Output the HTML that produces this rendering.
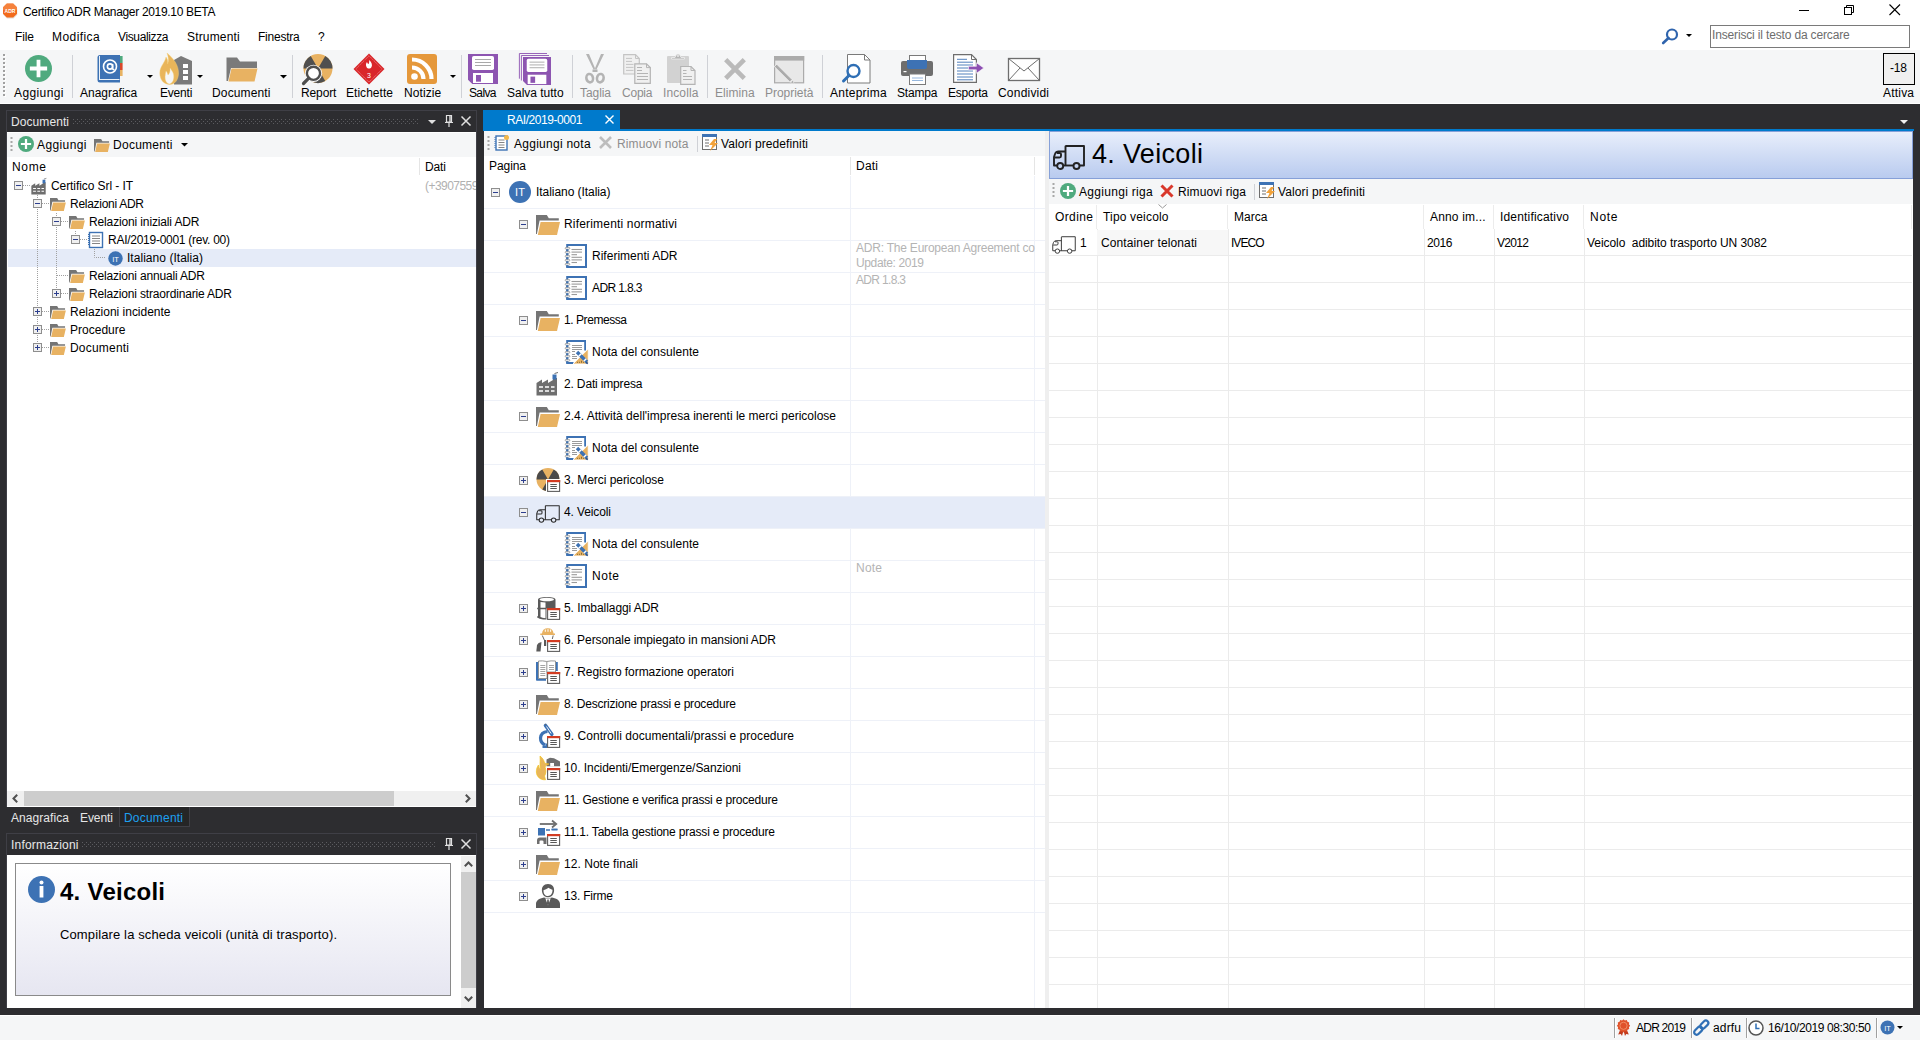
<!DOCTYPE html>
<html><head><meta charset="utf-8"><style>
html,body{margin:0;padding:0;}
body{width:1920px;height:1040px;overflow:hidden;position:relative;background:#2d2d30;font-family:"Liberation Sans", sans-serif;}
.a{position:absolute;}
.t{white-space:pre;}
svg{overflow:visible;}
</style></head><body>
<div class="a" style="left:0px;top:0px;width:1920px;height:50px;background:#fff;"></div>
<svg class="a" style="left:2px;top:3px;" width="16" height="16" viewBox="0 0 16 16"><path d="M4.8 1.2 H11.2 L15 5 V11 L11.2 14.8 H4.8 L1 11 V5 Z" fill="#c9b8a8" opacity="0.5" transform="translate(0.3,0.8)"/>
<path d="M4.8 0.5 H11.2 L15 4.3 V10.7 L11.2 14.5 H4.8 L1 10.7 V4.3 Z" fill="#f26a1b"/>
<path d="M4.8 0.5 H11.2 L15 4.3 V7 H1 V4.3 Z" fill="#f7965a" opacity="0.55"/>
<text x="8" y="9.8" text-anchor="middle" font-family="Liberation Sans" font-weight="bold" font-size="5" fill="#fff">ADR</text></svg>
<div class="a t" id="t1" style="left:23px;top:6px;font-size:12px;line-height:12px;color:#000;font-weight:normal;letter-spacing:-0.325px;">Certifico ADR Manager 2019.10 BETA</div>
<svg class="a" style="left:1799px;top:10px;" width="11" height="1" viewBox="0 0 11 1"><rect x="0" y="0" width="10" height="1" fill="#000"/></svg>
<svg class="a" style="left:1844px;top:5px;" width="11" height="11" viewBox="0 0 11 11"><path d="M2.5 2.5 V0.5 H9.5 V7.5 H7.5" fill="none" stroke="#000" stroke-width="1"/><rect x="0.5" y="2.5" width="7" height="7" fill="none" stroke="#000" stroke-width="1"/></svg>
<svg class="a" style="left:1889px;top:4px;" width="12" height="12" viewBox="0 0 12 12"><path d="M0.5 0.5 L11 11 M11 0.5 L0.5 11" stroke="#000" stroke-width="1.1"/></svg>
<div class="a t" id="t2" style="left:15px;top:31px;font-size:12px;line-height:12px;color:#000;font-weight:normal;letter-spacing:-0.115px;">File</div>
<div class="a t" id="t3" style="left:52px;top:31px;font-size:12px;line-height:12px;color:#000;font-weight:normal;letter-spacing:0.430px;">Modifica</div>
<div class="a t" id="t4" style="left:118px;top:31px;font-size:12px;line-height:12px;color:#000;font-weight:normal;letter-spacing:-0.368px;">Visualizza</div>
<div class="a t" id="t5" style="left:187px;top:31px;font-size:12px;line-height:12px;color:#000;font-weight:normal;letter-spacing:0.168px;">Strumenti</div>
<div class="a t" id="t6" style="left:258px;top:31px;font-size:12px;line-height:12px;color:#000;font-weight:normal;letter-spacing:-0.237px;">Finestra</div>
<div class="a t" id="t7" style="left:318px;top:31px;font-size:12px;line-height:12px;color:#000;font-weight:normal;letter-spacing:0.000px;">?</div>
<svg class="a" style="left:1662px;top:28px;" width="17" height="16" viewBox="0 0 17 16"><circle cx="10" cy="6.5" r="5" fill="none" stroke="#2f64ad" stroke-width="2.2"/><path d="M6.5 10 L1.2 15" stroke="#2f64ad" stroke-width="2.6" stroke-linecap="round"/></svg>
<svg class="a" style="left:1686px;top:34px;" width="6" height="3" viewBox="0 0 6 3"><path d="M0 0 H6 L3 3 Z" fill="#000"/></svg>
<div class="a" style="left:1710px;top:25px;width:200px;height:23px;background:#fff;box-sizing:border-box;border:1px solid #7a7a7a;"></div>
<div class="a t" id="t8" style="left:1712px;top:29px;font-size:12px;line-height:12px;color:#6d6d6d;font-weight:normal;letter-spacing:-0.156px;">Inserisci il testo da cercare</div>
<div class="a" style="left:0px;top:50px;width:1920px;height:53px;background:#f5f6f7;"></div>
<div class="a" style="left:0px;top:103px;width:1920px;height:1px;background:#fff;"></div>
<svg class="a" style="left:3px;top:54px;" width="4" height="44" viewBox="0 0 4 44"><path d="M2 1 V44" stroke="#fff" stroke-width="2" stroke-dasharray="2 2"/><path d="M1 0 V43" stroke="#a0a0a0" stroke-width="2" stroke-dasharray="2 2"/></svg>
<div class="a" style="left:72px;top:55px;width:1px;height:43px;background:#cfd1d6;"></div>
<div class="a" style="left:292px;top:55px;width:1px;height:43px;background:#cfd1d6;"></div>
<div class="a" style="left:461px;top:55px;width:1px;height:43px;background:#cfd1d6;"></div>
<div class="a" style="left:572px;top:55px;width:1px;height:43px;background:#cfd1d6;"></div>
<div class="a" style="left:707px;top:55px;width:1px;height:43px;background:#cfd1d6;"></div>
<div class="a" style="left:822px;top:55px;width:1px;height:43px;background:#cfd1d6;"></div>
<svg class="a" style="left:25px;top:55px;" width="27" height="27" viewBox="0 0 27 27"><circle cx="13.5" cy="13.5" r="13.5" fill="#4faa7e"/>
<path d="M4.859999999999999 13.5H22.14M13.5 4.859999999999999V22.14" stroke="#fff" stroke-width="3.7800000000000002"/></svg>
<div class="a t" id="t9" style="left:14px;top:87px;font-size:12px;line-height:12px;color:#000;font-weight:normal;letter-spacing:0.397px;">Aggiungi</div>
<svg class="a" style="left:97px;top:55px;" width="27" height="29" viewBox="0 0 27 29"><path d="M3 0 H23 V27.5 H3 Q0.5 27.5 0.5 25 V2.5 Q0.5 0 3 0Z" fill="#3d72b4"/>
<path d="M2 24.5 H22.5 M2.5 1 V24" stroke="#fff" stroke-width="0.9"/>
<rect x="23" y="1" width="2.6" height="7" fill="#4faa7e"/><rect x="23" y="8" width="2.6" height="7" fill="#d9482b"/><rect x="23" y="15" width="2.6" height="6" fill="#e8b262"/>
<circle cx="13" cy="11.5" r="6.5" fill="none" stroke="#fff" stroke-width="1.6"/>
<circle cx="13" cy="11.5" r="2.6" fill="none" stroke="#fff" stroke-width="1.6"/>
<path d="M15.6 9 V13 Q15.6 15 17.5 14.5" fill="none" stroke="#fff" stroke-width="1.6"/></svg>
<div class="a t" id="t10" style="left:80px;top:87px;font-size:12px;line-height:12px;color:#000;font-weight:normal;letter-spacing:-0.019px;">Anagrafica</div>
<svg class="a" style="left:147px;top:75px;" width="6" height="3" viewBox="0 0 6 3"><path d="M0 0 H6 L3 3 Z" fill="#000"/></svg>
<svg class="a" style="left:159px;top:53px;" width="34" height="32" viewBox="0 0 34 32"><path d="M15 7 L22 3 L33 8 V31.5 H15 Z" fill="#7a7a7a"/>
<rect x="24" y="11" width="5" height="4" fill="#fff"/><rect x="24" y="17" width="5" height="4" fill="#fff"/><rect x="24" y="23" width="5" height="4" fill="#fff"/>
<path fill-rule="evenodd" d="M8 0 C14 5 20 12 19.5 21 C19 27 16 31.5 11 31.5 C5 31.5 0.8 27 0.8 20 C0.8 13 6 10 7 4 C9 7 9 9 8.5 11 C10 8 9.5 4 8 0Z M10.5 31 C14 30 15.5 26 14.5 21 C14 19 12.5 17 11 15 C11.5 19 10 21 9 22 C8.5 20 8 19 7 18 C6 22 5.5 26 7 28.5 C8 30 9 31 10.5 31Z" fill="#e9b55a" stroke="#f5d27a" stroke-width="0.4"/></svg>
<div class="a t" id="t11" style="left:160px;top:87px;font-size:12px;line-height:12px;color:#000;font-weight:normal;letter-spacing:-0.192px;">Eventi</div>
<svg class="a" style="left:197px;top:75px;" width="6" height="3" viewBox="0 0 6 3"><path d="M0 0 H6 L3 3 Z" fill="#000"/></svg>
<svg class="a" style="left:226px;top:57px;" width="32" height="26" viewBox="0 0 32 26"><path d="M0.5 0.5 L0.5 24 L2 24 L5 11 L31 11 L31 4.5 L14 4.5 L11 0.5 Z" fill="#7a7a7a"/>
<path d="M5.5 11.5 L31.5 11.5 L28.5 24.5 L2.5 24.5 Z" fill="#e8b262"/></svg>
<div class="a t" id="t12" style="left:212px;top:87px;font-size:12px;line-height:12px;color:#000;font-weight:normal;letter-spacing:0.143px;">Documenti</div>
<svg class="a" style="left:280px;top:75px;" width="7" height="3" viewBox="0 0 7 3"><path d="M0 0 H7 L3.5 3.5 Z" fill="#000"/></svg>
<svg class="a" style="left:302px;top:54px;" width="32" height="32" viewBox="0 0 32 32"><circle cx="16" cy="14.5" r="14.5" fill="#e8b262"/>
<path d="M16 14.5 L23.25 1.94 A14.5 14.5 0 0 1 30.5 14.5 Z" fill="#4f4f4f"/>
<path d="M16 14.5 L23.25 27.06 A14.5 14.5 0 0 1 8.75 27.06 Z" fill="#4f4f4f"/>
<path d="M16 14.5 L1.5 14.5 A14.5 14.5 0 0 1 8.75 1.94 Z" fill="#4f4f4f"/>
<circle cx="11.5" cy="19.3" r="8.6" fill="#fff"/>
<circle cx="11.5" cy="19.3" r="6.6" fill="#fff" stroke="#4f4f4f" stroke-width="2.4"/>
<path d="M6.8 24.2 L1.5 29.5" stroke="#4f4f4f" stroke-width="3.2" stroke-linecap="round"/></svg>
<div class="a t" id="t13" style="left:301px;top:87px;font-size:12px;line-height:12px;color:#000;font-weight:normal;letter-spacing:-0.126px;">Report</div>
<svg class="a" style="left:353px;top:53px;" width="32" height="32" viewBox="0 0 32 32"><path d="M16 0.5 L31.5 16 L16 31.5 L0.5 16 Z" fill="#d9262a"/>
<path d="M16 2.8 L29.2 16 L16 29.2 L2.8 16 Z" fill="none" stroke="#fff" stroke-width="0.5" stroke-dasharray="1 0.8" opacity="0.85"/>
<path d="M16 7 C19 9.5 19.5 12 18.5 14 C17.5 16 14.5 16 13.5 14 C12.5 12 13 10 14 9 C14.5 10.5 15 11 15.5 11 C16 10 16.5 9 16 7Z" fill="#fff"/>
<text x="16" y="25" text-anchor="middle" font-family="Liberation Sans" font-size="7" fill="#fff">3</text></svg>
<div class="a t" id="t14" style="left:346px;top:87px;font-size:12px;line-height:12px;color:#000;font-weight:normal;letter-spacing:0.037px;">Etichette</div>
<svg class="a" style="left:407px;top:54px;" width="30" height="30" viewBox="0 0 30 30"><rect x="0" y="0" width="30" height="30" rx="3" fill="#e5983b"/>
<circle cx="7.5" cy="22.5" r="3.3" fill="#fff"/>
<path d="M5 13.5 A11.5 11.5 0 0 1 16.5 25 M5 5.5 A19.5 19.5 0 0 1 24.5 25" fill="none" stroke="#fff" stroke-width="4.2"/></svg>
<div class="a t" id="t15" style="left:404px;top:87px;font-size:12px;line-height:12px;color:#000;font-weight:normal;letter-spacing:0.102px;">Notizie</div>
<svg class="a" style="left:450px;top:75px;" width="6" height="3" viewBox="0 0 6 3"><path d="M0 0 H6 L3 3 Z" fill="#000"/></svg>
<svg class="a" style="left:468px;top:54px;" width="30" height="30" viewBox="0 0 30 30"><g transform="translate(0,0) scale(1)"><path d="M0 0 H30 V30 H4.3 L0 25.7 Z" fill="#8d55b1"/>
<rect x="4" y="2" width="22" height="14" rx="1.8" fill="#fff"/><path d="M7 5.5h16M7 8.5h16M7 11.5h16" stroke="#a9a9a9" stroke-width="1"/>
<rect x="5" y="19" width="20" height="10" fill="#fff"/><rect x="8" y="21" width="5" height="6.7" fill="#8d55b1"/></g></svg>
<div class="a t" id="t16" style="left:469px;top:87px;font-size:12px;line-height:12px;color:#000;font-weight:normal;letter-spacing:-0.633px;">Salva</div>
<svg class="a" style="left:519px;top:53px;" width="33" height="33" viewBox="0 0 33 33"><path d="M0.4 25.7 V0.5 H28" fill="none" stroke="#8d55b1" stroke-width="0.9"/>
<path d="M2.4 27.5 V2.5 H30" fill="none" stroke="#8d55b1" stroke-width="0.9"/>
<g transform="translate(4,4) scale(0.9333333333333333)"><path d="M0 0 H30 V30 H4.3 L0 25.7 Z" fill="#8d55b1"/>
<rect x="4" y="2" width="22" height="14" rx="1.8" fill="#fff"/><path d="M7 5.5h16M7 8.5h16M7 11.5h16" stroke="#a9a9a9" stroke-width="1"/>
<rect x="5" y="19" width="20" height="10" fill="#fff"/><rect x="8" y="21" width="5" height="6.7" fill="#8d55b1"/></g></svg>
<div class="a t" id="t17" style="left:507px;top:87px;font-size:12px;line-height:12px;color:#000;font-weight:normal;letter-spacing:-0.010px;">Salva tutto</div>
<svg class="a" style="left:585px;top:54px;" width="20" height="30" viewBox="0 0 20 30"><path d="M1 0 L8.5 15.5 L10.5 15.5 L4 0 Z M19 0 L11.5 15.5 L9.5 15.5 L16 0 Z" fill="#b4b4b4"/>
<rect x="7.5" y="15.5" width="5" height="2.5" fill="#b4b4b4"/>
<ellipse cx="4.7" cy="24.2" rx="3.3" ry="4.2" fill="none" stroke="#b4b4b4" stroke-width="2.6" transform="rotate(-12 4.7 24.2)"/>
<ellipse cx="15.3" cy="24.2" rx="3.3" ry="4.2" fill="none" stroke="#b4b4b4" stroke-width="2.6" transform="rotate(12 15.3 24.2)"/></svg>
<div class="a t" id="t18" style="left:580px;top:87px;font-size:12px;line-height:12px;color:#8d8d8d;font-weight:normal;letter-spacing:-0.072px;">Taglia</div>
<svg class="a" style="left:623px;top:54px;" width="29" height="31" viewBox="0 0 29 31"><path d="M0.7 0.7 H12.5 L16.3 4.5 V20 H0.7 Z" fill="#f0f0f0" stroke="#c4c4c4" stroke-width="1.2"/>
<path d="M12.5 0.7 V4.5 H16.3" fill="none" stroke="#c4c4c4" stroke-width="1"/>
<path d="M3 4.4h6M3 7.4h6M3 10.4h7.5M3 13.4h7.5M3 16.4h7.5" stroke="#c4c4c4" stroke-width="1"/>
<path d="M11.8 9.8 H23.5 L27.3 13.6 V29.3 H11.8 Z" fill="#f0f0f0" stroke="#b4b4b4" stroke-width="1.2"/>
<path d="M23.5 9.8 V13.6 H27.3" fill="none" stroke="#b4b4b4" stroke-width="1"/>
<path d="M14 13.5h5M14 16.5h5M14 19.5h11M14 22.5h11M14 25.5h11" stroke="#b4b4b4" stroke-width="1"/></svg>
<div class="a t" id="t19" style="left:622px;top:87px;font-size:12px;line-height:12px;color:#8d8d8d;font-weight:normal;letter-spacing:-0.215px;">Copia</div>
<svg class="a" style="left:667px;top:53px;" width="29" height="32" viewBox="0 0 29 32"><rect x="0" y="3" width="22" height="27" rx="1" fill="#d2d2d2"/>
<path d="M4.5 6 H17.5 V4.5 H14 Q13 1 11 1 Q9 1 8 4.5 H4.5 Z" fill="#b4b4b4" stroke="#f0f0f0" stroke-width="0.8"/>
<circle cx="11" cy="3" r="0.9" fill="#f0f0f0"/>
<path d="M13.7 13.5 H24 L28 17.5 V31.3 H13.7 Z" fill="#f0f0f0" stroke="#b4b4b4" stroke-width="1.2"/>
<path d="M24 13.5 V17.5 H28" fill="none" stroke="#b4b4b4" stroke-width="1"/>
<path d="M16 17.5h3.5M16 20.5h3.5M16 23.5h9M16 26.5h9" stroke="#b4b4b4" stroke-width="1"/></svg>
<div class="a t" id="t20" style="left:663px;top:87px;font-size:12px;line-height:12px;color:#8d8d8d;font-weight:normal;letter-spacing:0.119px;">Incolla</div>
<svg class="a" style="left:724px;top:58px;" width="22" height="22" viewBox="0 0 22 22"><path d="M1.7 1.7 L20.3 20.3 M20.3 1.7 L1.7 20.3" stroke="#bababa" stroke-width="4.6"/></svg>
<div class="a t" id="t21" style="left:715px;top:87px;font-size:12px;line-height:12px;color:#8d8d8d;font-weight:normal;letter-spacing:0.040px;">Elimina</div>
<svg class="a" style="left:774px;top:56px;" width="31" height="30" viewBox="0 0 31 30"><rect x="0.6" y="0.6" width="29" height="26.2" fill="#e8e8e8" stroke="#ababab" stroke-width="1.2"/>
<rect x="0" y="0" width="30.2" height="4.6" fill="#ababab"/>
<path d="M0.2 10.5 L2.8 8.2 L18.2 23.6 L15.8 26 Z" fill="#ababab" stroke="#f0f0f0" stroke-width="0.9"/>
<path d="M16.5 26.5 L19 24 L20 28 Z" fill="#ababab" stroke="#f0f0f0" stroke-width="0.6"/></svg>
<div class="a t" id="t22" style="left:765px;top:87px;font-size:12px;line-height:12px;color:#8d8d8d;font-weight:normal;letter-spacing:-0.025px;">Proprietà</div>
<svg class="a" style="left:842px;top:54px;" width="29" height="31" viewBox="0 0 29 31"><path d="M5.5 0.5 H22.5 L28 6 V29 H5.5 Z" fill="#fff" stroke="#7a7a7a" stroke-width="1"/>
<path d="M22.5 0.5 V6 H28" fill="none" stroke="#7a7a7a" stroke-width="1"/>
<circle cx="11.5" cy="17" r="6" fill="none" stroke="#2f6fb5" stroke-width="2.4"/>
<path d="M7 21.5 L1.5 27" stroke="#2f6fb5" stroke-width="3" stroke-linecap="round"/></svg>
<div class="a t" id="t23" style="left:830px;top:87px;font-size:12px;line-height:12px;color:#000;font-weight:normal;letter-spacing:0.237px;">Anteprima</div>
<svg class="a" style="left:901px;top:55px;" width="33" height="30" viewBox="0 0 33 30"><rect x="8.5" y="0.5" width="16" height="10" fill="#fff" stroke="#7a7a7a" stroke-width="1"/>
<rect x="0" y="6" width="32" height="15" rx="2" fill="#6e6e6e"/>
<path d="M6 5 H26 V12 Q26 14 24 14 H8 Q6 14 6 12 Z" fill="#3d72b4"/>
<rect x="8.5" y="19" width="16" height="10.5" fill="#fff" stroke="#7a7a7a" stroke-width="1"/>
<path d="M11 23h11M11 25.5h11" stroke="#6a9ad0" stroke-width="0.7"/>
<rect x="2.5" y="16" width="3" height="1.2" fill="#fff"/></svg>
<div class="a t" id="t24" style="left:897px;top:87px;font-size:12px;line-height:12px;color:#000;font-weight:normal;letter-spacing:-0.192px;">Stampa</div>
<svg class="a" style="left:953px;top:54px;" width="32" height="31" viewBox="0 0 32 31"><path d="M0.6 0.6 H18.5 L23.4 5.5 V28.4 H0.6 Z" fill="#fff" stroke="#6e6e6e" stroke-width="1.2"/>
<path d="M18.5 0.6 V5.5 H23.4" fill="none" stroke="#6e6e6e" stroke-width="1"/>
<path d="M4 5.3h10M4 8.2h16M4 11h16M4 14h16M4 17h16M4 20h16M4 23h16M4 25.8h16" stroke="#3d72b4" stroke-width="0.9"/>
<path d="M15.5 12.3 H23.5 V8.8 L30.8 14 L23.5 19.3 V15.8 H15.5 Z" fill="#8d4fb3" stroke="#fff" stroke-width="0.6"/></svg>
<div class="a t" id="t25" style="left:948px;top:87px;font-size:12px;line-height:12px;color:#000;font-weight:normal;letter-spacing:-0.227px;">Esporta</div>
<svg class="a" style="left:1008px;top:58px;" width="33" height="24" viewBox="0 0 33 24"><rect x="0.5" y="0.5" width="31" height="22" fill="#fff" stroke="#6e6e6e" stroke-width="1.3"/>
<path d="M0.5 0.5 L16 13 L31.5 0.5 M0.5 22.5 L12 10 M31.5 22.5 L20 10" fill="none" stroke="#6e6e6e" stroke-width="1"/></svg>
<div class="a t" id="t26" style="left:998px;top:87px;font-size:12px;line-height:12px;color:#000;font-weight:normal;letter-spacing:0.205px;">Condividi</div>
<div class="a" style="left:1883px;top:53px;width:32px;height:32px;background:#f0f0f0;box-sizing:border-box;border:1px solid #000;"></div>
<div class="a t" id="t27" style="left:1890px;top:62px;font-size:12px;line-height:12px;color:#000;font-weight:normal;letter-spacing:-0.172px;">-18</div>
<div class="a t" id="t28" style="left:1883px;top:87px;font-size:12px;line-height:12px;color:#000;font-weight:normal;letter-spacing:0.197px;">Attiva</div>
<div class="a" style="left:0px;top:104px;width:1920px;height:910px;background:#2d2d30;"></div>
<div class="a" style="left:6px;top:110px;width:471px;height:697px;box-sizing:border-box;border:1px solid #3f3f46;"></div>
<div class="a t" id="t29" style="left:11px;top:116px;font-size:12px;line-height:12px;color:#e8e8e8;font-weight:normal;letter-spacing:0.080px;">Documenti</div>
<svg class="a" style="left:73px;top:119px;" width="345" height="5" viewBox="0 0 345 5"><path d="M0 0.5 H345 M2 2.5 H345 M0 4.5 H345" stroke="#5c5c60" stroke-width="1" stroke-dasharray="1 3"/></svg>
<svg class="a" style="left:428px;top:120px;" width="8" height="4" viewBox="0 0 8 4"><path d="M0 0 H8 L4 4 Z" fill="#e0e0e0"/></svg>
<svg class="a" style="left:445px;top:115px;" width="8" height="12" viewBox="0 0 8 12"><path d="M1.5 0.5 H6.5 V7 H1.5 Z M0 7.5 H8 M4 7.5 V12" fill="none" stroke="#e0e0e0" stroke-width="1.2"/><path d="M5 1 V7" stroke="#e0e0e0" stroke-width="1.4"/></svg>
<svg class="a" style="left:461px;top:116px;" width="10" height="10" viewBox="0 0 10 10"><path d="M0.5 0.5 L9.5 9.5 M9.5 0.5 L0.5 9.5" stroke="#e0e0e0" stroke-width="1.5"/></svg>
<div class="a" style="left:7px;top:132px;width:469px;height:675px;background:#fff;"></div>
<div class="a" style="left:7px;top:133px;width:469px;height:24px;background:#f5f6f7;"></div>
<svg class="a" style="left:10px;top:137px;" width="3" height="16" viewBox="0 0 3 16"><path d="M1.5 0 V16" stroke="#a8a8a8" stroke-width="2" stroke-dasharray="2 2"/></svg>
<svg class="a" style="left:18px;top:136px;" width="16" height="16" viewBox="0 0 16 16"><circle cx="8.0" cy="8.0" r="8.0" fill="#4faa7e"/>
<path d="M2.88 8.0H13.120000000000001M8.0 2.88V13.120000000000001" stroke="#fff" stroke-width="2.24"/></svg>
<div class="a t" id="t30" style="left:37px;top:139px;font-size:12px;line-height:12px;color:#000;font-weight:normal;letter-spacing:0.397px;">Aggiungi</div>
<svg class="a" style="left:94px;top:137px;" width="16" height="15" viewBox="0 0 16 15"><g transform="scale(0.66)"><g transform="scale(1.0)">
<path d="M0 2.9 H10.8 L12.8 6.3 H22.8 V8.6 H3.6 L0.9 22 H0 Z" fill="#757575"/>
<path d="M4.6 10 H24 L21 22.9 H1.8 Z" fill="#e8b262"/>
</g></g></svg>
<div class="a t" id="t31" style="left:113px;top:139px;font-size:12px;line-height:12px;color:#000;font-weight:normal;letter-spacing:0.268px;">Documenti</div>
<svg class="a" style="left:181px;top:143px;" width="7" height="4" viewBox="0 0 7 4"><path d="M0 0 H7 L3.5 3.5 Z" fill="#000"/></svg>
<div class="a t" id="t32" style="left:12px;top:161px;font-size:12px;line-height:12px;color:#000;font-weight:normal;letter-spacing:0.661px;">Nome</div>
<div class="a" style="left:419px;top:158px;width:1px;height:17px;background:#e5e5e5;"></div>
<div class="a t" id="t33" style="left:425px;top:161px;font-size:12px;line-height:12px;color:#000;font-weight:normal;letter-spacing:-0.115px;">Dati</div>
<div class="a" style="left:8px;top:249px;width:468px;height:18px;background:#e5ebf8;"></div>
<svg class="a" style="left:0px;top:170px;" width="130" height="200" viewBox="0 0 130 200"><g stroke="#a0a0a0" stroke-width="1" stroke-dasharray="1 1" fill="none">
<path d="M23 15.5 H30"/>
<path d="M37.5 25 V178"/>
<path d="M42 33.5 H49 M42 141.5 H49 M42 159.5 H49 M42 177.5 H49"/>
<path d="M56.5 43 V124"/>
<path d="M61 51.5 H68 M57 105.5 H68 M61 123.5 H68"/>
<path d="M75.5 61 V69.5"/>
<path d="M94.5 79 V87.5 H106"/>
<path d="M80 69.5 H87"/>
</g></svg>
<svg class="a" style="left:14px;top:181px;" width="9" height="9" viewBox="0 0 9 9"><rect x="0.5" y="0.5" width="8" height="8" fill="#f0f0f0" stroke="#8e8e8e" stroke-width="1"/><path d="M2 4.5h5" stroke="#2d3f8e" stroke-width="1"/></svg>
<svg class="a" style="left:31px;top:178px;" width="17" height="16" viewBox="0 0 17 16"><g transform="scale(0.7)"><g transform="scale(1.0)">
<path d="M0.5 23.5 V11 L6 7.5 V11 L12 7.5 V11 L17 8 V6 H21 V23.5 Z" fill="#6e6e6e"/>
<rect x="16.5" y="2.5" width="4" height="5" fill="#3d72b4"/>
<path d="M18.5 1.5 L22 0.5" stroke="#6e6e6e" stroke-width="1"/>
<path d="M3 15h4M9 15h4M15 15h3.5M3 19h4M9 19h4M15 19h3.5" stroke="#fff" stroke-width="1.6"/>
</g></g></svg>
<div class="a t" id="t34" style="left:51px;top:180px;font-size:12px;line-height:12px;color:#000;font-weight:normal;letter-spacing:-0.079px;">Certifico Srl - IT</div>
<svg class="a" style="left:33px;top:199px;" width="9" height="9" viewBox="0 0 9 9"><rect x="0.5" y="0.5" width="8" height="8" fill="#f0f0f0" stroke="#8e8e8e" stroke-width="1"/><path d="M2 4.5h5" stroke="#2d3f8e" stroke-width="1"/></svg>
<svg class="a" style="left:50px;top:196px;" width="16" height="16" viewBox="0 0 16 16"><g transform="scale(0.66)"><g transform="scale(1.0)">
<path d="M0 2.9 H10.8 L12.8 6.3 H22.8 V8.6 H3.6 L0.9 22 H0 Z" fill="#757575"/>
<path d="M4.6 10 H24 L21 22.9 H1.8 Z" fill="#e8b262"/>
</g></g></svg>
<div class="a t" id="t35" style="left:70px;top:198px;font-size:12px;line-height:12px;color:#000;font-weight:normal;letter-spacing:-0.281px;">Relazioni ADR</div>
<svg class="a" style="left:52px;top:217px;" width="9" height="9" viewBox="0 0 9 9"><rect x="0.5" y="0.5" width="8" height="8" fill="#f0f0f0" stroke="#8e8e8e" stroke-width="1"/><path d="M2 4.5h5" stroke="#2d3f8e" stroke-width="1"/></svg>
<svg class="a" style="left:69px;top:214px;" width="16" height="16" viewBox="0 0 16 16"><g transform="scale(0.66)"><g transform="scale(1.0)">
<path d="M0 2.9 H10.8 L12.8 6.3 H22.8 V8.6 H3.6 L0.9 22 H0 Z" fill="#757575"/>
<path d="M4.6 10 H24 L21 22.9 H1.8 Z" fill="#e8b262"/>
</g></g></svg>
<div class="a t" id="t36" style="left:89px;top:216px;font-size:12px;line-height:12px;color:#000;font-weight:normal;letter-spacing:-0.138px;">Relazioni iniziali ADR</div>
<svg class="a" style="left:71px;top:235px;" width="9" height="9" viewBox="0 0 9 9"><rect x="0.5" y="0.5" width="8" height="8" fill="#f0f0f0" stroke="#8e8e8e" stroke-width="1"/><path d="M2 4.5h5" stroke="#2d3f8e" stroke-width="1"/></svg>
<svg class="a" style="left:88px;top:232px;" width="15" height="16" viewBox="0 0 15 16"><rect x="1.5" y="0.5" width="13" height="15" fill="#fff" stroke="#3d72b4" stroke-width="1.4"/>
<path d="M0.5 2 V14" stroke="#3d72b4" stroke-width="1" stroke-dasharray="1 1"/>
<path d="M4 4h8M4 6.5h8M4 9h8M4 11.5h8" stroke="#777" stroke-width="0.9"/></svg>
<div class="a t" id="t37" style="left:108px;top:234px;font-size:12px;line-height:12px;color:#000;font-weight:normal;letter-spacing:-0.266px;">RAI/2019-0001 (rev. 00)</div>
<svg class="a" style="left:108px;top:251px;" width="15" height="15" viewBox="0 0 15 15"><circle cx="7.5" cy="7.5" r="7.2" fill="#3d72b4"/><text x="7.5" y="10.5" text-anchor="middle" font-family="Liberation Sans" font-size="7.5" fill="#fff">IT</text></svg>
<div class="a t" id="t38" style="left:127px;top:252px;font-size:12px;line-height:12px;color:#000;font-weight:normal;letter-spacing:0.039px;">Italiano (Italia)</div>
<svg class="a" style="left:69px;top:268px;" width="16" height="16" viewBox="0 0 16 16"><g transform="scale(0.66)"><g transform="scale(1.0)">
<path d="M0 2.9 H10.8 L12.8 6.3 H22.8 V8.6 H3.6 L0.9 22 H0 Z" fill="#757575"/>
<path d="M4.6 10 H24 L21 22.9 H1.8 Z" fill="#e8b262"/>
</g></g></svg>
<div class="a t" id="t39" style="left:89px;top:270px;font-size:12px;line-height:12px;color:#000;font-weight:normal;letter-spacing:-0.170px;">Relazioni annuali ADR</div>
<svg class="a" style="left:52px;top:289px;" width="9" height="9" viewBox="0 0 9 9"><rect x="0.5" y="0.5" width="8" height="8" fill="#f0f0f0" stroke="#8e8e8e" stroke-width="1"/><path d="M2 4.5h5" stroke="#2d3f8e" stroke-width="1"/><path d="M4.5 2v5" stroke="#2d3f8e" stroke-width="1"/></svg>
<svg class="a" style="left:69px;top:286px;" width="16" height="16" viewBox="0 0 16 16"><g transform="scale(0.66)"><g transform="scale(1.0)">
<path d="M0 2.9 H10.8 L12.8 6.3 H22.8 V8.6 H3.6 L0.9 22 H0 Z" fill="#757575"/>
<path d="M4.6 10 H24 L21 22.9 H1.8 Z" fill="#e8b262"/>
</g></g></svg>
<div class="a t" id="t40" style="left:89px;top:288px;font-size:12px;line-height:12px;color:#000;font-weight:normal;letter-spacing:-0.169px;">Relazioni straordinarie ADR</div>
<svg class="a" style="left:33px;top:307px;" width="9" height="9" viewBox="0 0 9 9"><rect x="0.5" y="0.5" width="8" height="8" fill="#f0f0f0" stroke="#8e8e8e" stroke-width="1"/><path d="M2 4.5h5" stroke="#2d3f8e" stroke-width="1"/><path d="M4.5 2v5" stroke="#2d3f8e" stroke-width="1"/></svg>
<svg class="a" style="left:50px;top:304px;" width="16" height="16" viewBox="0 0 16 16"><g transform="scale(0.66)"><g transform="scale(1.0)">
<path d="M0 2.9 H10.8 L12.8 6.3 H22.8 V8.6 H3.6 L0.9 22 H0 Z" fill="#757575"/>
<path d="M4.6 10 H24 L21 22.9 H1.8 Z" fill="#e8b262"/>
</g></g></svg>
<div class="a t" id="t41" style="left:70px;top:306px;font-size:12px;line-height:12px;color:#000;font-weight:normal;letter-spacing:-0.013px;">Relazioni incidente</div>
<svg class="a" style="left:33px;top:325px;" width="9" height="9" viewBox="0 0 9 9"><rect x="0.5" y="0.5" width="8" height="8" fill="#f0f0f0" stroke="#8e8e8e" stroke-width="1"/><path d="M2 4.5h5" stroke="#2d3f8e" stroke-width="1"/><path d="M4.5 2v5" stroke="#2d3f8e" stroke-width="1"/></svg>
<svg class="a" style="left:50px;top:322px;" width="16" height="16" viewBox="0 0 16 16"><g transform="scale(0.66)"><g transform="scale(1.0)">
<path d="M0 2.9 H10.8 L12.8 6.3 H22.8 V8.6 H3.6 L0.9 22 H0 Z" fill="#757575"/>
<path d="M4.6 10 H24 L21 22.9 H1.8 Z" fill="#e8b262"/>
</g></g></svg>
<div class="a t" id="t42" style="left:70px;top:324px;font-size:12px;line-height:12px;color:#000;font-weight:normal;letter-spacing:0.016px;">Procedure</div>
<svg class="a" style="left:33px;top:343px;" width="9" height="9" viewBox="0 0 9 9"><rect x="0.5" y="0.5" width="8" height="8" fill="#f0f0f0" stroke="#8e8e8e" stroke-width="1"/><path d="M2 4.5h5" stroke="#2d3f8e" stroke-width="1"/><path d="M4.5 2v5" stroke="#2d3f8e" stroke-width="1"/></svg>
<svg class="a" style="left:50px;top:340px;" width="16" height="16" viewBox="0 0 16 16"><g transform="scale(0.66)"><g transform="scale(1.0)">
<path d="M0 2.9 H10.8 L12.8 6.3 H22.8 V8.6 H3.6 L0.9 22 H0 Z" fill="#757575"/>
<path d="M4.6 10 H24 L21 22.9 H1.8 Z" fill="#e8b262"/>
</g></g></svg>
<div class="a t" id="t43" style="left:70px;top:342px;font-size:12px;line-height:12px;color:#000;font-weight:normal;letter-spacing:0.205px;">Documenti</div>
<div class="a" style="left:7px;top:177px;width:469px;height:20px;overflow:hidden"><div class="a" style="left:418px;top:3px;font-size:12px;line-height:12px;color:#b0b0b0;white-space:pre;letter-spacing:-0.55px">(+39075598</div></div>
<div class="a" style="left:7px;top:791px;width:469px;height:15px;background:#f0f0f0;"></div>
<div class="a" style="left:24px;top:791px;width:370px;height:15px;background:#cdcdcd;"></div>
<svg class="a" style="left:12px;top:794px;" width="6" height="9" viewBox="0 0 6 9"><path d="M5.2 0.8 L1.5 4.5 L5.2 8.2" fill="none" stroke="#505050" stroke-width="2"/></svg>
<svg class="a" style="left:465px;top:794px;" width="6" height="9" viewBox="0 0 6 9"><path d="M0.8 0.8 L4.5 4.5 L0.8 8.2" fill="none" stroke="#505050" stroke-width="2"/></svg>
<div class="a" style="left:119px;top:807px;width:71px;height:20px;background:#252526;box-sizing:border-box;border:1px solid #3f3f46;border-top:none;"></div>
<div class="a t" id="t44" style="left:11px;top:812px;font-size:12px;line-height:12px;color:#e6e6e6;font-weight:normal;letter-spacing:0.069px;">Anagrafica</div>
<div class="a t" id="t45" style="left:80px;top:812px;font-size:12px;line-height:12px;color:#e6e6e6;font-weight:normal;letter-spacing:-0.072px;">Eventi</div>
<div class="a t" id="t46" style="left:124px;top:812px;font-size:12px;line-height:12px;color:#1ea0f0;font-weight:normal;letter-spacing:0.205px;">Documenti</div>
<div class="a" style="left:6px;top:833px;width:471px;height:175px;box-sizing:border-box;border:1px solid #3f3f46;"></div>
<div class="a t" id="t47" style="left:11px;top:839px;font-size:12px;line-height:12px;color:#e8e8e8;font-weight:normal;letter-spacing:0.193px;">Informazioni</div>
<svg class="a" style="left:82px;top:842px;" width="354" height="5" viewBox="0 0 354 5"><path d="M0 0.5 H354 M2 2.5 H354 M0 4.5 H354" stroke="#5c5c60" stroke-width="1" stroke-dasharray="1 3"/></svg>
<svg class="a" style="left:445px;top:838px;" width="8" height="12" viewBox="0 0 8 12"><path d="M1.5 0.5 H6.5 V7 H1.5 Z M0 7.5 H8 M4 7.5 V12" fill="none" stroke="#e0e0e0" stroke-width="1.2"/><path d="M5 1 V7" stroke="#e0e0e0" stroke-width="1.4"/></svg>
<svg class="a" style="left:461px;top:839px;" width="10" height="10" viewBox="0 0 10 10"><path d="M0.5 0.5 L9.5 9.5 M9.5 0.5 L0.5 9.5" stroke="#e0e0e0" stroke-width="1.5"/></svg>
<div class="a" style="left:7px;top:855px;width:469px;height:153px;background:#fff;"></div>
<div class="a" style="left:15px;top:863px;width:436px;height:133px;background:linear-gradient(#ffffff, #e6e6f1);box-sizing:border-box;border:1px solid #8a8a8a;"></div>
<svg class="a" style="left:28px;top:876px;" width="27" height="27" viewBox="0 0 27 27"><circle cx="13.5" cy="13.5" r="13.5" fill="#3d72b4"/><circle cx="13.5" cy="6.5" r="2" fill="#fff"/><rect x="11.6" y="10" width="3.8" height="11.5" fill="#fff"/></svg>
<div class="a t" id="t48" style="left:60px;top:880px;font-size:24px;line-height:24px;color:#000;font-weight:bold;letter-spacing:0.252px;">4. Veicoli</div>
<div class="a t" id="t49" style="left:60px;top:928px;font-size:13px;line-height:13px;color:#000;font-weight:normal;letter-spacing:0.126px;">Compilare la scheda veicoli (unità di trasporto).</div>
<div class="a" style="left:461px;top:856px;width:15px;height:152px;background:#f0f0f0;"></div>
<div class="a" style="left:461px;top:872px;width:15px;height:116px;background:#cdcdcd;"></div>
<svg class="a" style="left:464px;top:861px;" width="9" height="6" viewBox="0 0 9 6"><path d="M0.8 5.2 L4.5 1.5 L8.2 5.2" fill="none" stroke="#505050" stroke-width="2"/></svg>
<svg class="a" style="left:464px;top:996px;" width="9" height="6" viewBox="0 0 9 6"><path d="M0.8 0.8 L4.5 4.5 L8.2 0.8" fill="none" stroke="#505050" stroke-width="2"/></svg>
<div class="a" style="left:483px;top:110px;width:137px;height:19px;background:#007acc;"></div>
<div class="a t" id="t50" style="left:507px;top:114px;font-size:12px;line-height:12px;color:#fff;font-weight:normal;letter-spacing:-0.436px;">RAI/2019-0001</div>
<svg class="a" style="left:605px;top:115px;" width="9" height="9" viewBox="0 0 9 9"><path d="M0.5 0.5 L8.5 8.5 M8.5 0.5 L0.5 8.5" stroke="#fff" stroke-width="1.4"/></svg>
<div class="a" style="left:483px;top:129px;width:1431px;height:2px;background:#007acc;"></div>
<svg class="a" style="left:1900px;top:120px;" width="8" height="4" viewBox="0 0 8 4"><path d="M0 0 H8 L4 4 Z" fill="#f0f0f0"/></svg>
<div class="a" style="left:484px;top:131px;width:561px;height:877px;background:#fff;"></div>
<div class="a" style="left:484px;top:131px;width:561px;height:25px;background:#f5f6f7;"></div>
<svg class="a" style="left:487px;top:136px;" width="3" height="16" viewBox="0 0 3 16"><path d="M1.5 0 V16" stroke="#a8a8a8" stroke-width="2" stroke-dasharray="2 2"/></svg>
<svg class="a" style="left:494px;top:134px;" width="16" height="17" viewBox="0 0 16 17"><rect x="2" y="2" width="11" height="14" fill="#fff" stroke="#3d72b4" stroke-width="1.4"/>
<path d="M1 3 V15" stroke="#3d72b4" stroke-width="1" stroke-dasharray="1 1"/><path d="M4.5 6h6M4.5 8.5h6M4.5 11h6M4.5 13.5h6" stroke="#777" stroke-width="0.9"/>
<circle cx="12.5" cy="3.5" r="2.5" fill="#f2b84b"/></svg>
<div class="a t" id="t51" style="left:514px;top:138px;font-size:12px;line-height:12px;color:#000;font-weight:normal;letter-spacing:0.266px;">Aggiungi nota</div>
<svg class="a" style="left:599px;top:136px;" width="13" height="13" viewBox="0 0 13 13"><path d="M1 1 L12 12 M12 1 L1 12" stroke="#bdbdbd" stroke-width="2.6"/></svg>
<div class="a t" id="t52" style="left:617px;top:138px;font-size:12px;line-height:12px;color:#8d8d8d;font-weight:normal;letter-spacing:0.124px;">Rimuovi nota</div>
<div class="a" style="left:697px;top:136px;width:1px;height:16px;background:#cfd1d6;"></div>
<svg class="a" style="left:702px;top:134px;" width="17" height="17" viewBox="0 0 17 17"><rect x="0.5" y="0.5" width="14" height="15" fill="#fff" stroke="#6e6e6e" stroke-width="1"/><rect x="0" y="0" width="15" height="3" fill="#3d72b4"/>
<path d="M3 6h4M3 9h4M3 12h4" stroke="#6e6e6e" stroke-width="1"/><path d="M12 5 L7 11 H10.5 L8 17 L16 9 H12.5 L15 5 Z" fill="#f2a23a"/></svg>
<div class="a t" id="t53" style="left:721px;top:138px;font-size:12px;line-height:12px;color:#000;font-weight:normal;letter-spacing:0.108px;">Valori predefiniti</div>
<div class="a t" id="t54" style="left:489px;top:160px;font-size:12px;line-height:12px;color:#000;font-weight:normal;letter-spacing:-0.075px;">Pagina</div>
<div class="a" style="left:850px;top:157px;width:1px;height:18px;background:#e5e5e5;"></div>
<div class="a t" id="t55" style="left:856px;top:160px;font-size:12px;line-height:12px;color:#000;font-weight:normal;letter-spacing:0.219px;">Dati</div>
<div class="a" style="left:1034px;top:157px;width:1px;height:18px;background:#e5e5e5;"></div>
<div class="a" style="left:850px;top:176px;width:1px;height:832px;background:#eef1f8;"></div>
<div class="a" style="left:1034px;top:176px;width:1px;height:832px;background:#eef1f8;"></div>
<div class="a" style="left:484px;top:208px;width:561px;height:1px;background:#eef1f8;"></div>
<svg class="a" style="left:491px;top:188px;" width="9" height="9" viewBox="0 0 9 9"><rect x="0.5" y="0.5" width="8" height="8" fill="#f0f0f0" stroke="#8e8e8e" stroke-width="1"/><path d="M2 4.5h5" stroke="#2d3f8e" stroke-width="1"/></svg>
<svg class="a" style="left:509px;top:181px;" width="22" height="22" viewBox="0 0 22 22"><circle cx="11.0" cy="11.0" r="11.0" fill="#3d72b4"/>
<text x="11.0" y="14.96" text-anchor="middle" font-family="Liberation Sans" font-size="11" fill="#fff">IT</text></svg>
<div class="a t" id="t56" style="left:536px;top:186px;font-size:12px;line-height:12px;color:#000;font-weight:normal;letter-spacing:-0.055px;">Italiano (Italia)</div>
<div class="a" style="left:484px;top:240px;width:561px;height:1px;background:#eef1f8;"></div>
<svg class="a" style="left:519px;top:220px;" width="9" height="9" viewBox="0 0 9 9"><rect x="0.5" y="0.5" width="8" height="8" fill="#f0f0f0" stroke="#8e8e8e" stroke-width="1"/><path d="M2 4.5h5" stroke="#2d3f8e" stroke-width="1"/></svg>
<svg class="a" style="left:536px;top:212px;" width="24" height="24" viewBox="0 0 24 24"><g transform="scale(1.0)">
<path d="M0 2.9 H10.8 L12.8 6.3 H22.8 V8.6 H3.6 L0.9 22 H0 Z" fill="#757575"/>
<path d="M4.6 10 H24 L21 22.9 H1.8 Z" fill="#e8b262"/>
</g></svg>
<div class="a t" id="t57" style="left:564px;top:218px;font-size:12px;line-height:12px;color:#000;font-weight:normal;letter-spacing:0.182px;">Riferimenti normativi</div>
<div class="a" style="left:484px;top:272px;width:561px;height:1px;background:#eef1f8;"></div>
<svg class="a" style="left:565px;top:244px;" width="24" height="24" viewBox="0 0 24 24"><g transform="scale(1.0)">
<rect x="2.2" y="1" width="18.8" height="22" fill="#fff" stroke="#3d72b4" stroke-width="2"/>
<rect x="0.2" y="3.4" width="4.6" height="1.8" rx="0.9" fill="#fff" stroke="#888" stroke-width="0.7"/><rect x="1.2" y="5.4" width="2.2" height="1.8" fill="#3d72b4"/><rect x="0.2" y="7.4" width="4.6" height="1.8" rx="0.9" fill="#fff" stroke="#888" stroke-width="0.7"/><rect x="1.2" y="9.4" width="2.2" height="1.8" fill="#3d72b4"/><rect x="0.2" y="11.4" width="4.6" height="1.8" rx="0.9" fill="#fff" stroke="#888" stroke-width="0.7"/><rect x="1.2" y="13.4" width="2.2" height="1.8" fill="#3d72b4"/><rect x="0.2" y="15.4" width="4.6" height="1.8" rx="0.9" fill="#fff" stroke="#888" stroke-width="0.7"/><rect x="1.2" y="17.4" width="2.2" height="1.8" fill="#3d72b4"/><rect x="0.2" y="19.4" width="4.6" height="1.8" rx="0.9" fill="#fff" stroke="#888" stroke-width="0.7"/><rect x="1.2" y="21.4" width="2.2" height="1.8" fill="#3d72b4"/>
<path d="M6.5 5.5H17" stroke="#9a9a9a" stroke-width="1.1"/><path d="M6.5 8.1H17" stroke="#9a9a9a" stroke-width="1.1"/><path d="M6.5 10.7H12" stroke="#9a9a9a" stroke-width="1.1"/><path d="M6.5 13.3H17" stroke="#9a9a9a" stroke-width="1.1"/><path d="M6.5 15.9H17" stroke="#9a9a9a" stroke-width="1.1"/><path d="M6.5 18.5H12" stroke="#9a9a9a" stroke-width="1.1"/>
</g></svg>
<div class="a t" id="t58" style="left:592px;top:250px;font-size:12px;line-height:12px;color:#000;font-weight:normal;letter-spacing:0.010px;">Riferimenti ADR</div>
<div class="a" style="left:484px;top:304px;width:561px;height:1px;background:#eef1f8;"></div>
<svg class="a" style="left:565px;top:276px;" width="24" height="24" viewBox="0 0 24 24"><g transform="scale(1.0)">
<rect x="2.2" y="1" width="18.8" height="22" fill="#fff" stroke="#3d72b4" stroke-width="2"/>
<rect x="0.2" y="3.4" width="4.6" height="1.8" rx="0.9" fill="#fff" stroke="#888" stroke-width="0.7"/><rect x="1.2" y="5.4" width="2.2" height="1.8" fill="#3d72b4"/><rect x="0.2" y="7.4" width="4.6" height="1.8" rx="0.9" fill="#fff" stroke="#888" stroke-width="0.7"/><rect x="1.2" y="9.4" width="2.2" height="1.8" fill="#3d72b4"/><rect x="0.2" y="11.4" width="4.6" height="1.8" rx="0.9" fill="#fff" stroke="#888" stroke-width="0.7"/><rect x="1.2" y="13.4" width="2.2" height="1.8" fill="#3d72b4"/><rect x="0.2" y="15.4" width="4.6" height="1.8" rx="0.9" fill="#fff" stroke="#888" stroke-width="0.7"/><rect x="1.2" y="17.4" width="2.2" height="1.8" fill="#3d72b4"/><rect x="0.2" y="19.4" width="4.6" height="1.8" rx="0.9" fill="#fff" stroke="#888" stroke-width="0.7"/><rect x="1.2" y="21.4" width="2.2" height="1.8" fill="#3d72b4"/>
<path d="M6.5 5.5H17" stroke="#9a9a9a" stroke-width="1.1"/><path d="M6.5 8.1H17" stroke="#9a9a9a" stroke-width="1.1"/><path d="M6.5 10.7H12" stroke="#9a9a9a" stroke-width="1.1"/><path d="M6.5 13.3H17" stroke="#9a9a9a" stroke-width="1.1"/><path d="M6.5 15.9H17" stroke="#9a9a9a" stroke-width="1.1"/><path d="M6.5 18.5H12" stroke="#9a9a9a" stroke-width="1.1"/>
</g></svg>
<div class="a t" id="t59" style="left:592px;top:282px;font-size:12px;line-height:12px;color:#000;font-weight:normal;letter-spacing:-0.607px;">ADR 1.8.3</div>
<div class="a" style="left:484px;top:336px;width:561px;height:1px;background:#eef1f8;"></div>
<svg class="a" style="left:519px;top:316px;" width="9" height="9" viewBox="0 0 9 9"><rect x="0.5" y="0.5" width="8" height="8" fill="#f0f0f0" stroke="#8e8e8e" stroke-width="1"/><path d="M2 4.5h5" stroke="#2d3f8e" stroke-width="1"/></svg>
<svg class="a" style="left:536px;top:308px;" width="24" height="24" viewBox="0 0 24 24"><g transform="scale(1.0)">
<path d="M0 2.9 H10.8 L12.8 6.3 H22.8 V8.6 H3.6 L0.9 22 H0 Z" fill="#757575"/>
<path d="M4.6 10 H24 L21 22.9 H1.8 Z" fill="#e8b262"/>
</g></svg>
<div class="a t" id="t60" style="left:564px;top:314px;font-size:12px;line-height:12px;color:#000;font-weight:normal;letter-spacing:-0.436px;">1. Premessa</div>
<div class="a" style="left:484px;top:368px;width:561px;height:1px;background:#eef1f8;"></div>
<svg class="a" style="left:565px;top:340px;" width="24" height="24" viewBox="0 0 24 24"><g transform="scale(1.0)">
<path d="M8.5 23 H2.2 V1 H20 V10.5" fill="#fff" stroke="#3d72b4" stroke-width="2"/>
<rect x="3.2" y="2" width="16" height="20" fill="#fff"/>
<rect x="0.2" y="3.4" width="4.6" height="1.8" rx="0.9" fill="#fff" stroke="#888" stroke-width="0.7"/><rect x="1.2" y="5.4" width="2.2" height="1.8" fill="#3d72b4"/><rect x="0.2" y="7.4" width="4.6" height="1.8" rx="0.9" fill="#fff" stroke="#888" stroke-width="0.7"/><rect x="1.2" y="9.4" width="2.2" height="1.8" fill="#3d72b4"/><rect x="0.2" y="11.4" width="4.6" height="1.8" rx="0.9" fill="#fff" stroke="#888" stroke-width="0.7"/><rect x="1.2" y="13.4" width="2.2" height="1.8" fill="#3d72b4"/><rect x="0.2" y="15.4" width="4.6" height="1.8" rx="0.9" fill="#fff" stroke="#888" stroke-width="0.7"/><rect x="1.2" y="17.4" width="2.2" height="1.8" fill="#3d72b4"/><rect x="0.2" y="19.4" width="4.6" height="1.8" rx="0.9" fill="#fff" stroke="#888" stroke-width="0.7"/><rect x="1.2" y="21.4" width="2.2" height="1.8" fill="#3d72b4"/>
<path d="M7 5.5H17M7 7.5H17M7 9.5H17M7 11.5H10M7 14.5H10M7 16.5H12M7 18.5H12" stroke="#9a9a9a" stroke-width="1.1"/>
<path d="M8 24 L23.2 24 L23.2 9 Z" fill="#e8b262" stroke="#fff" stroke-width="0.8"/>
<path d="M12.5 22.8v-1M14.5 22.8v-1M16.5 22.8v-2M18.5 22.8v-1" stroke="#6b5a30" stroke-width="0.8"/>
<path d="M12 12 L22 22" stroke="#3d72b4" stroke-width="3.4"/>
<path d="M14.5 14.5 L15.5 15.5 M19.5 19.5 L20.5 20.5" stroke="#fff" stroke-width="3.6"/>
<path d="M21 22.5 L22.8 23.5" stroke="#1d4f9a" stroke-width="1.5"/>
</g></svg>
<div class="a t" id="t61" style="left:592px;top:346px;font-size:12px;line-height:12px;color:#000;font-weight:normal;letter-spacing:0.051px;">Nota del consulente</div>
<div class="a" style="left:484px;top:400px;width:561px;height:1px;background:#eef1f8;"></div>
<svg class="a" style="left:536px;top:372px;" width="24" height="24" viewBox="0 0 24 24"><g transform="scale(1.0)">
<path d="M0.5 23.5 V11 L6 7.5 V11 L12 7.5 V11 L17 8 V6 H21 V23.5 Z" fill="#6e6e6e"/>
<rect x="16.5" y="2.5" width="4" height="5" fill="#3d72b4"/>
<path d="M18.5 1.5 L22 0.5" stroke="#6e6e6e" stroke-width="1"/>
<path d="M3 15h4M9 15h4M15 15h3.5M3 19h4M9 19h4M15 19h3.5" stroke="#fff" stroke-width="1.6"/>
</g></svg>
<div class="a t" id="t62" style="left:564px;top:378px;font-size:12px;line-height:12px;color:#000;font-weight:normal;letter-spacing:-0.157px;">2. Dati impresa</div>
<div class="a" style="left:484px;top:432px;width:561px;height:1px;background:#eef1f8;"></div>
<svg class="a" style="left:519px;top:412px;" width="9" height="9" viewBox="0 0 9 9"><rect x="0.5" y="0.5" width="8" height="8" fill="#f0f0f0" stroke="#8e8e8e" stroke-width="1"/><path d="M2 4.5h5" stroke="#2d3f8e" stroke-width="1"/></svg>
<svg class="a" style="left:536px;top:404px;" width="24" height="24" viewBox="0 0 24 24"><g transform="scale(1.0)">
<path d="M0 2.9 H10.8 L12.8 6.3 H22.8 V8.6 H3.6 L0.9 22 H0 Z" fill="#757575"/>
<path d="M4.6 10 H24 L21 22.9 H1.8 Z" fill="#e8b262"/>
</g></svg>
<div class="a t" id="t63" style="left:564px;top:410px;font-size:12px;line-height:12px;color:#000;font-weight:normal;letter-spacing:0.005px;">2.4. Attività dell&#x27;impresa inerenti le merci pericolose</div>
<div class="a" style="left:484px;top:464px;width:561px;height:1px;background:#eef1f8;"></div>
<svg class="a" style="left:565px;top:436px;" width="24" height="24" viewBox="0 0 24 24"><g transform="scale(1.0)">
<path d="M8.5 23 H2.2 V1 H20 V10.5" fill="#fff" stroke="#3d72b4" stroke-width="2"/>
<rect x="3.2" y="2" width="16" height="20" fill="#fff"/>
<rect x="0.2" y="3.4" width="4.6" height="1.8" rx="0.9" fill="#fff" stroke="#888" stroke-width="0.7"/><rect x="1.2" y="5.4" width="2.2" height="1.8" fill="#3d72b4"/><rect x="0.2" y="7.4" width="4.6" height="1.8" rx="0.9" fill="#fff" stroke="#888" stroke-width="0.7"/><rect x="1.2" y="9.4" width="2.2" height="1.8" fill="#3d72b4"/><rect x="0.2" y="11.4" width="4.6" height="1.8" rx="0.9" fill="#fff" stroke="#888" stroke-width="0.7"/><rect x="1.2" y="13.4" width="2.2" height="1.8" fill="#3d72b4"/><rect x="0.2" y="15.4" width="4.6" height="1.8" rx="0.9" fill="#fff" stroke="#888" stroke-width="0.7"/><rect x="1.2" y="17.4" width="2.2" height="1.8" fill="#3d72b4"/><rect x="0.2" y="19.4" width="4.6" height="1.8" rx="0.9" fill="#fff" stroke="#888" stroke-width="0.7"/><rect x="1.2" y="21.4" width="2.2" height="1.8" fill="#3d72b4"/>
<path d="M7 5.5H17M7 7.5H17M7 9.5H17M7 11.5H10M7 14.5H10M7 16.5H12M7 18.5H12" stroke="#9a9a9a" stroke-width="1.1"/>
<path d="M8 24 L23.2 24 L23.2 9 Z" fill="#e8b262" stroke="#fff" stroke-width="0.8"/>
<path d="M12.5 22.8v-1M14.5 22.8v-1M16.5 22.8v-2M18.5 22.8v-1" stroke="#6b5a30" stroke-width="0.8"/>
<path d="M12 12 L22 22" stroke="#3d72b4" stroke-width="3.4"/>
<path d="M14.5 14.5 L15.5 15.5 M19.5 19.5 L20.5 20.5" stroke="#fff" stroke-width="3.6"/>
<path d="M21 22.5 L22.8 23.5" stroke="#1d4f9a" stroke-width="1.5"/>
</g></svg>
<div class="a t" id="t64" style="left:592px;top:442px;font-size:12px;line-height:12px;color:#000;font-weight:normal;letter-spacing:0.051px;">Nota del consulente</div>
<div class="a" style="left:484px;top:496px;width:561px;height:1px;background:#eef1f8;"></div>
<svg class="a" style="left:519px;top:476px;" width="9" height="9" viewBox="0 0 9 9"><rect x="0.5" y="0.5" width="8" height="8" fill="#f0f0f0" stroke="#8e8e8e" stroke-width="1"/><path d="M2 4.5h5" stroke="#2d3f8e" stroke-width="1"/><path d="M4.5 2v5" stroke="#2d3f8e" stroke-width="1"/></svg>
<svg class="a" style="left:536px;top:468px;" width="24" height="24" viewBox="0 0 24 24"><g transform="scale(1.0)">
<circle cx="12" cy="11.5" r="11.5" fill="#e8b262"/>
<path d="M12 11.5 L17.75 1.54 A11.5 11.5 0 0 1 23.50 11.50 Z" fill="#4a4a4a"/><path d="M12 11.5 L17.75 21.46 A11.5 11.5 0 0 1 6.25 21.46 Z" fill="#4a4a4a"/><path d="M12 11.5 L0.50 11.50 A11.5 11.5 0 0 1 6.25 1.54 Z" fill="#4a4a4a"/>
<rect x="10" y="11" width="14.5" height="13.5" fill="#fff"/>
<g transform="translate(11,12) scale(1)">
<rect x="0.6" y="0.6" width="12" height="10.8" fill="#fff" stroke="#5f5f5f" stroke-width="1.1"/>
<rect x="0" y="0" width="13.2" height="2.2" fill="#d23c22"/>
<path d="M3.3 4.5h6.5M3.3 6.5h6.5M3.3 8.5h6.5" stroke="#444" stroke-width="0.9"/>
</g>
</g></svg>
<div class="a t" id="t65" style="left:564px;top:474px;font-size:12px;line-height:12px;color:#000;font-weight:normal;letter-spacing:-0.040px;">3. Merci pericolose</div>
<div class="a" style="left:484px;top:497px;width:561px;height:31px;background:#e5ebf8;"></div>
<div class="a" style="left:484px;top:528px;width:561px;height:1px;background:#eef1f8;"></div>
<svg class="a" style="left:519px;top:508px;" width="9" height="9" viewBox="0 0 9 9"><rect x="0.5" y="0.5" width="8" height="8" fill="#f0f0f0" stroke="#8e8e8e" stroke-width="1"/><path d="M2 4.5h5" stroke="#2d3f8e" stroke-width="1"/></svg>
<svg class="a" style="left:536px;top:505px;" width="24" height="18" viewBox="0 0 24 18"><g transform="scale(0.75,0.72)" fill="none" stroke="#2b2b2b" stroke-width="1.4" stroke-linejoin="round">
<path d="M12.5 20.5 V1.5 Q12.5 1 13 1 H31 V20.5 H26.5"/>
<path d="M20.5 20.5 H10.5"/>
<path d="M12.5 6.5 H5.5 Q3 6.5 2 9 L1 12 V20.5 H4"/>
<path d="M1.5 12.5 H6.5 Q8 12.5 8 11 V9 Q8 8 6.5 8 H4"/>
<circle cx="7.2" cy="21" r="3"/>
<circle cx="23.5" cy="21" r="3"/>
</g></svg>
<div class="a t" id="t66" style="left:564px;top:506px;font-size:12px;line-height:12px;color:#000;font-weight:normal;letter-spacing:-0.115px;">4. Veicoli</div>
<div class="a" style="left:484px;top:560px;width:561px;height:1px;background:#eef1f8;"></div>
<svg class="a" style="left:565px;top:532px;" width="24" height="24" viewBox="0 0 24 24"><g transform="scale(1.0)">
<path d="M8.5 23 H2.2 V1 H20 V10.5" fill="#fff" stroke="#3d72b4" stroke-width="2"/>
<rect x="3.2" y="2" width="16" height="20" fill="#fff"/>
<rect x="0.2" y="3.4" width="4.6" height="1.8" rx="0.9" fill="#fff" stroke="#888" stroke-width="0.7"/><rect x="1.2" y="5.4" width="2.2" height="1.8" fill="#3d72b4"/><rect x="0.2" y="7.4" width="4.6" height="1.8" rx="0.9" fill="#fff" stroke="#888" stroke-width="0.7"/><rect x="1.2" y="9.4" width="2.2" height="1.8" fill="#3d72b4"/><rect x="0.2" y="11.4" width="4.6" height="1.8" rx="0.9" fill="#fff" stroke="#888" stroke-width="0.7"/><rect x="1.2" y="13.4" width="2.2" height="1.8" fill="#3d72b4"/><rect x="0.2" y="15.4" width="4.6" height="1.8" rx="0.9" fill="#fff" stroke="#888" stroke-width="0.7"/><rect x="1.2" y="17.4" width="2.2" height="1.8" fill="#3d72b4"/><rect x="0.2" y="19.4" width="4.6" height="1.8" rx="0.9" fill="#fff" stroke="#888" stroke-width="0.7"/><rect x="1.2" y="21.4" width="2.2" height="1.8" fill="#3d72b4"/>
<path d="M7 5.5H17M7 7.5H17M7 9.5H17M7 11.5H10M7 14.5H10M7 16.5H12M7 18.5H12" stroke="#9a9a9a" stroke-width="1.1"/>
<path d="M8 24 L23.2 24 L23.2 9 Z" fill="#e8b262" stroke="#fff" stroke-width="0.8"/>
<path d="M12.5 22.8v-1M14.5 22.8v-1M16.5 22.8v-2M18.5 22.8v-1" stroke="#6b5a30" stroke-width="0.8"/>
<path d="M12 12 L22 22" stroke="#3d72b4" stroke-width="3.4"/>
<path d="M14.5 14.5 L15.5 15.5 M19.5 19.5 L20.5 20.5" stroke="#fff" stroke-width="3.6"/>
<path d="M21 22.5 L22.8 23.5" stroke="#1d4f9a" stroke-width="1.5"/>
</g></svg>
<div class="a t" id="t67" style="left:592px;top:538px;font-size:12px;line-height:12px;color:#000;font-weight:normal;letter-spacing:0.051px;">Nota del consulente</div>
<div class="a" style="left:484px;top:592px;width:561px;height:1px;background:#eef1f8;"></div>
<svg class="a" style="left:565px;top:564px;" width="24" height="24" viewBox="0 0 24 24"><g transform="scale(1.0)">
<rect x="2.2" y="1" width="18.8" height="22" fill="#fff" stroke="#3d72b4" stroke-width="2"/>
<rect x="0.2" y="3.4" width="4.6" height="1.8" rx="0.9" fill="#fff" stroke="#888" stroke-width="0.7"/><rect x="1.2" y="5.4" width="2.2" height="1.8" fill="#3d72b4"/><rect x="0.2" y="7.4" width="4.6" height="1.8" rx="0.9" fill="#fff" stroke="#888" stroke-width="0.7"/><rect x="1.2" y="9.4" width="2.2" height="1.8" fill="#3d72b4"/><rect x="0.2" y="11.4" width="4.6" height="1.8" rx="0.9" fill="#fff" stroke="#888" stroke-width="0.7"/><rect x="1.2" y="13.4" width="2.2" height="1.8" fill="#3d72b4"/><rect x="0.2" y="15.4" width="4.6" height="1.8" rx="0.9" fill="#fff" stroke="#888" stroke-width="0.7"/><rect x="1.2" y="17.4" width="2.2" height="1.8" fill="#3d72b4"/><rect x="0.2" y="19.4" width="4.6" height="1.8" rx="0.9" fill="#fff" stroke="#888" stroke-width="0.7"/><rect x="1.2" y="21.4" width="2.2" height="1.8" fill="#3d72b4"/>
<path d="M6.5 5.5H17" stroke="#9a9a9a" stroke-width="1.1"/><path d="M6.5 8.1H17" stroke="#9a9a9a" stroke-width="1.1"/><path d="M6.5 10.7H12" stroke="#9a9a9a" stroke-width="1.1"/><path d="M6.5 13.3H17" stroke="#9a9a9a" stroke-width="1.1"/><path d="M6.5 15.9H17" stroke="#9a9a9a" stroke-width="1.1"/><path d="M6.5 18.5H12" stroke="#9a9a9a" stroke-width="1.1"/>
</g></svg>
<div class="a t" id="t68" style="left:592px;top:570px;font-size:12px;line-height:12px;color:#000;font-weight:normal;letter-spacing:0.547px;">Note</div>
<div class="a" style="left:484px;top:624px;width:561px;height:1px;background:#eef1f8;"></div>
<svg class="a" style="left:519px;top:604px;" width="9" height="9" viewBox="0 0 9 9"><rect x="0.5" y="0.5" width="8" height="8" fill="#f0f0f0" stroke="#8e8e8e" stroke-width="1"/><path d="M2 4.5h5" stroke="#2d3f8e" stroke-width="1"/><path d="M4.5 2v5" stroke="#2d3f8e" stroke-width="1"/></svg>
<svg class="a" style="left:536px;top:596px;" width="24" height="24" viewBox="0 0 24 24"><g transform="scale(1.0)">
<path d="M2 3.5 Q2 1 11 1 Q19.5 1 19.5 3.5 V12 H10.5 V23.5 Q3 23.5 2 21.5 Z" fill="#5a5a5a"/>
<path d="M4.5 6 V21 Q6 22 9.5 22.3 V6.5 Z" fill="#fff"/>
<ellipse cx="10.8" cy="3.5" rx="7.2" ry="1.7" fill="#fff"/>
<path d="M1.2 12.5 H10.5 M1.2 21 H3" stroke="#5a5a5a" stroke-width="1.4"/>
<g transform="translate(11,12) scale(1)">
<rect x="0.6" y="0.6" width="12" height="10.8" fill="#fff" stroke="#5f5f5f" stroke-width="1.1"/>
<rect x="0" y="0" width="13.2" height="2.2" fill="#d23c22"/>
<path d="M3.3 4.5h6.5M3.3 6.5h6.5M3.3 8.5h6.5" stroke="#444" stroke-width="0.9"/>
</g>
</g></svg>
<div class="a t" id="t69" style="left:564px;top:602px;font-size:12px;line-height:12px;color:#000;font-weight:normal;letter-spacing:-0.065px;">5. Imballaggi ADR</div>
<div class="a" style="left:484px;top:656px;width:561px;height:1px;background:#eef1f8;"></div>
<svg class="a" style="left:519px;top:636px;" width="9" height="9" viewBox="0 0 9 9"><rect x="0.5" y="0.5" width="8" height="8" fill="#f0f0f0" stroke="#8e8e8e" stroke-width="1"/><path d="M2 4.5h5" stroke="#2d3f8e" stroke-width="1"/><path d="M4.5 2v5" stroke="#2d3f8e" stroke-width="1"/></svg>
<svg class="a" style="left:536px;top:628px;" width="24" height="24" viewBox="0 0 24 24"><g transform="scale(1.0)">
<path d="M6 5.5 Q6.5 0.3 11.8 0.3 Q17 0.3 17.6 5.5 H19 V7 H4.3 V5.5 Z" fill="#e8b262"/>
<path d="M9.3 1.5v2.3M12 1.2v2.6M14.6 1.5v2.3" stroke="#fff" stroke-width="1"/>
<path d="M6.3 7.5 L8.8 13 M17.2 7.5 L16.3 11" stroke="#555" stroke-width="0.9"/>
<rect x="8" y="12" width="2.2" height="6" fill="#5a5a5a"/>
<path d="M0.3 23.5 L1 17 Q2 14.5 5.5 14 L4.5 23.5 Z" fill="#5a5a5a"/>
<g transform="translate(11,12) scale(1)">
<rect x="0.6" y="0.6" width="12" height="10.8" fill="#fff" stroke="#5f5f5f" stroke-width="1.1"/>
<rect x="0" y="0" width="13.2" height="2.2" fill="#d23c22"/>
<path d="M3.3 4.5h6.5M3.3 6.5h6.5M3.3 8.5h6.5" stroke="#444" stroke-width="0.9"/>
</g>
</g></svg>
<div class="a t" id="t70" style="left:564px;top:634px;font-size:12px;line-height:12px;color:#000;font-weight:normal;letter-spacing:-0.075px;">6. Personale impiegato in mansioni ADR</div>
<div class="a" style="left:484px;top:688px;width:561px;height:1px;background:#eef1f8;"></div>
<svg class="a" style="left:519px;top:668px;" width="9" height="9" viewBox="0 0 9 9"><rect x="0.5" y="0.5" width="8" height="8" fill="#f0f0f0" stroke="#8e8e8e" stroke-width="1"/><path d="M2 4.5h5" stroke="#2d3f8e" stroke-width="1"/><path d="M4.5 2v5" stroke="#2d3f8e" stroke-width="1"/></svg>
<svg class="a" style="left:536px;top:660px;" width="24" height="24" viewBox="0 0 24 24"><g transform="scale(1.0)">
<path d="M0 2 H2.5 V18.5 H10 V20.8 H0.8 Q0 20.8 0 20 Z" fill="#3d72b4"/>
<path d="M19.5 2 H21.8 V11 H19.5 Z" fill="#3d72b4"/>
<path d="M2.5 1 Q6.5 0.5 10.8 1.5 Q15 0.5 19.5 1 V12 H11 V18.5 H2.5 Z" fill="#fff" stroke="#8a8a8a" stroke-width="0.9"/>
<path d="M10.8 1.5 V12.5" stroke="#9a9a9a" stroke-width="1.1"/>
<path d="M4.3 5.5h5M4.3 7.5h5M4.3 9.5h5M4.3 11.5h5M4.3 13.5h5M4.3 15.5h5M13 5.5h5M13 7.5h5M13 9.5h5" stroke="#9a9a9a" stroke-width="0.9"/>
<g transform="translate(11,12) scale(1)">
<rect x="0.6" y="0.6" width="12" height="10.8" fill="#fff" stroke="#5f5f5f" stroke-width="1.1"/>
<rect x="0" y="0" width="13.2" height="2.2" fill="#d23c22"/>
<path d="M3.3 4.5h6.5M3.3 6.5h6.5M3.3 8.5h6.5" stroke="#444" stroke-width="0.9"/>
</g>
</g></svg>
<div class="a t" id="t71" style="left:564px;top:666px;font-size:12px;line-height:12px;color:#000;font-weight:normal;letter-spacing:-0.046px;">7. Registro formazione operatori</div>
<div class="a" style="left:484px;top:720px;width:561px;height:1px;background:#eef1f8;"></div>
<svg class="a" style="left:519px;top:700px;" width="9" height="9" viewBox="0 0 9 9"><rect x="0.5" y="0.5" width="8" height="8" fill="#f0f0f0" stroke="#8e8e8e" stroke-width="1"/><path d="M2 4.5h5" stroke="#2d3f8e" stroke-width="1"/><path d="M4.5 2v5" stroke="#2d3f8e" stroke-width="1"/></svg>
<svg class="a" style="left:536px;top:692px;" width="24" height="24" viewBox="0 0 24 24"><g transform="scale(1.0)">
<path d="M0 2.9 H10.8 L12.8 6.3 H22.8 V8.6 H3.6 L0.9 22 H0 Z" fill="#757575"/>
<path d="M4.6 10 H24 L21 22.9 H1.8 Z" fill="#e8b262"/>
</g></svg>
<div class="a t" id="t72" style="left:564px;top:698px;font-size:12px;line-height:12px;color:#000;font-weight:normal;letter-spacing:-0.211px;">8. Descrizione prassi e procedure</div>
<div class="a" style="left:484px;top:752px;width:561px;height:1px;background:#eef1f8;"></div>
<svg class="a" style="left:519px;top:732px;" width="9" height="9" viewBox="0 0 9 9"><rect x="0.5" y="0.5" width="8" height="8" fill="#f0f0f0" stroke="#8e8e8e" stroke-width="1"/><path d="M2 4.5h5" stroke="#2d3f8e" stroke-width="1"/><path d="M4.5 2v5" stroke="#2d3f8e" stroke-width="1"/></svg>
<svg class="a" style="left:536px;top:724px;" width="24" height="24" viewBox="0 0 24 24"><g transform="scale(1.0)">
<path d="M9.5 1.5 L15.8 10.3" stroke="#3d72b4" stroke-width="3.6" stroke-linecap="round"/>
<path d="M10.5 2.5 L15.2 9.5" stroke="#fff" stroke-width="0.9"/>
<path d="M9 0.8 L10 0.2" stroke="#666" stroke-width="1"/>
<path d="M11.5 7.5 Q5 8 4.5 14 Q4.5 19 9 21" fill="none" stroke="#3d72b4" stroke-width="3.2"/>
<path d="M6.5 22.8 H10.5 V19.5" fill="none" stroke="#3d72b4" stroke-width="2.2"/>
<g transform="translate(11,12) scale(1)">
<rect x="0.6" y="0.6" width="12" height="10.8" fill="#fff" stroke="#5f5f5f" stroke-width="1.1"/>
<rect x="0" y="0" width="13.2" height="2.2" fill="#d23c22"/>
<path d="M3.3 4.5h6.5M3.3 6.5h6.5M3.3 8.5h6.5" stroke="#444" stroke-width="0.9"/>
</g>
</g></svg>
<div class="a t" id="t73" style="left:564px;top:730px;font-size:12px;line-height:12px;color:#000;font-weight:normal;letter-spacing:0.045px;">9. Controlli documentali/prassi e procedure</div>
<div class="a" style="left:484px;top:784px;width:561px;height:1px;background:#eef1f8;"></div>
<svg class="a" style="left:519px;top:764px;" width="9" height="9" viewBox="0 0 9 9"><rect x="0.5" y="0.5" width="8" height="8" fill="#f0f0f0" stroke="#8e8e8e" stroke-width="1"/><path d="M2 4.5h5" stroke="#2d3f8e" stroke-width="1"/><path d="M4.5 2v5" stroke="#2d3f8e" stroke-width="1"/></svg>
<svg class="a" style="left:536px;top:756px;" width="24" height="24" viewBox="0 0 24 24"><g transform="scale(1.0)">
<path d="M10.5 3.5 L14 1.8 L18 2.3 L24 5.5 V10.3 H10.5 Z" fill="#6e6e6e"/>
<rect x="14.2" y="7" width="3.8" height="3.4" fill="#fff"/>
<path d="M4 0 C6.5 2 8 4 8.5 7 C9.5 7.5 10.5 7.5 13 8 C11 9 9.5 9.5 9 11 C10.5 14 10 18 8.5 20 L9.5 23.8 C6 24 2.5 22.5 1 19 C-0.5 15 1 11 2.5 9 C3 12 3.5 13 4.5 13.5 C3.5 10 4.5 5 4 0 Z" fill="#e8b55a" stroke="#f2c21b" stroke-width="0.7"/>
<g transform="translate(11,12) scale(1)">
<rect x="0.6" y="0.6" width="12" height="10.8" fill="#fff" stroke="#5f5f5f" stroke-width="1.1"/>
<rect x="0" y="0" width="13.2" height="2.2" fill="#d23c22"/>
<path d="M3.3 4.5h6.5M3.3 6.5h6.5M3.3 8.5h6.5" stroke="#444" stroke-width="0.9"/>
</g>
</g></svg>
<div class="a t" id="t74" style="left:564px;top:762px;font-size:12px;line-height:12px;color:#000;font-weight:normal;letter-spacing:-0.057px;">10. Incidenti/Emergenze/Sanzioni</div>
<div class="a" style="left:484px;top:816px;width:561px;height:1px;background:#eef1f8;"></div>
<svg class="a" style="left:519px;top:796px;" width="9" height="9" viewBox="0 0 9 9"><rect x="0.5" y="0.5" width="8" height="8" fill="#f0f0f0" stroke="#8e8e8e" stroke-width="1"/><path d="M2 4.5h5" stroke="#2d3f8e" stroke-width="1"/><path d="M4.5 2v5" stroke="#2d3f8e" stroke-width="1"/></svg>
<svg class="a" style="left:536px;top:788px;" width="24" height="24" viewBox="0 0 24 24"><g transform="scale(1.0)">
<path d="M0 2.9 H10.8 L12.8 6.3 H22.8 V8.6 H3.6 L0.9 22 H0 Z" fill="#757575"/>
<path d="M4.6 10 H24 L21 22.9 H1.8 Z" fill="#e8b262"/>
</g></svg>
<div class="a t" id="t75" style="left:564px;top:794px;font-size:12px;line-height:12px;color:#000;font-weight:normal;letter-spacing:-0.176px;">11. Gestione e verifica prassi e procedure</div>
<div class="a" style="left:484px;top:848px;width:561px;height:1px;background:#eef1f8;"></div>
<svg class="a" style="left:519px;top:828px;" width="9" height="9" viewBox="0 0 9 9"><rect x="0.5" y="0.5" width="8" height="8" fill="#f0f0f0" stroke="#8e8e8e" stroke-width="1"/><path d="M2 4.5h5" stroke="#2d3f8e" stroke-width="1"/><path d="M4.5 2v5" stroke="#2d3f8e" stroke-width="1"/></svg>
<svg class="a" style="left:536px;top:820px;" width="24" height="24" viewBox="0 0 24 24"><g transform="scale(1.0)">
<path d="M3.8 4 H20" stroke="#6e6e6e" stroke-width="1.8"/>
<path d="M16 0.5 L20.2 4 L16 7.5" fill="none" stroke="#6e6e6e" stroke-width="1.8"/>
<rect x="2" y="8" width="7" height="7.5" fill="#3d72b4"/>
<path d="M10 10 H14 M15.5 9.8 H21.5" stroke="#3d72b4" stroke-width="1.3"/>
<path d="M15.5 9.3 H21.5" stroke="#3d72b4" stroke-width="1.5"/>
<path d="M1 24 V20.5 Q1 17.5 4 17.5 H10.5 V24 H7.5 V21.5 Q7.5 20.5 6 20.5 H4.5 Q3.5 20.5 3.5 21.5 V24 Z" fill="#6e6e6e"/>
<g transform="translate(11,14) scale(1)">
<rect x="0.6" y="0.6" width="12" height="10.8" fill="#fff" stroke="#5f5f5f" stroke-width="1.1"/>
<rect x="0" y="0" width="13.2" height="2.2" fill="#d23c22"/>
<path d="M3.3 4.5h6.5M3.3 6.5h6.5M3.3 8.5h6.5" stroke="#444" stroke-width="0.9"/>
</g>
</g></svg>
<div class="a t" id="t76" style="left:564px;top:826px;font-size:12px;line-height:12px;color:#000;font-weight:normal;letter-spacing:-0.184px;">11.1. Tabella gestione prassi e procedure</div>
<div class="a" style="left:484px;top:880px;width:561px;height:1px;background:#eef1f8;"></div>
<svg class="a" style="left:519px;top:860px;" width="9" height="9" viewBox="0 0 9 9"><rect x="0.5" y="0.5" width="8" height="8" fill="#f0f0f0" stroke="#8e8e8e" stroke-width="1"/><path d="M2 4.5h5" stroke="#2d3f8e" stroke-width="1"/><path d="M4.5 2v5" stroke="#2d3f8e" stroke-width="1"/></svg>
<svg class="a" style="left:536px;top:852px;" width="24" height="24" viewBox="0 0 24 24"><g transform="scale(1.0)">
<path d="M0 2.9 H10.8 L12.8 6.3 H22.8 V8.6 H3.6 L0.9 22 H0 Z" fill="#757575"/>
<path d="M4.6 10 H24 L21 22.9 H1.8 Z" fill="#e8b262"/>
</g></svg>
<div class="a t" id="t77" style="left:564px;top:858px;font-size:12px;line-height:12px;color:#000;font-weight:normal;letter-spacing:0.044px;">12. Note finali</div>
<div class="a" style="left:484px;top:912px;width:561px;height:1px;background:#eef1f8;"></div>
<svg class="a" style="left:519px;top:892px;" width="9" height="9" viewBox="0 0 9 9"><rect x="0.5" y="0.5" width="8" height="8" fill="#f0f0f0" stroke="#8e8e8e" stroke-width="1"/><path d="M2 4.5h5" stroke="#2d3f8e" stroke-width="1"/><path d="M4.5 2v5" stroke="#2d3f8e" stroke-width="1"/></svg>
<svg class="a" style="left:536px;top:884px;" width="24" height="24" viewBox="0 0 24 24"><g transform="scale(1.0)">
<path d="M12 0 C7.5 0 5.7 3 5.9 6.5 C6.1 10.5 8.5 13.3 12 13.3 C15.5 13.3 17.9 10.5 18.1 6.5 C18.3 3 16.5 0 12 0 Z" fill="#5a5a5a"/>
<path d="M7.5 6.2 C9 5.8 11 4.8 12.5 3.8 C14 5 15.5 5.5 16.5 5.8 C16.6 9.5 14.8 12 12 12 C9.2 12 7.4 9.8 7.5 6.2 Z" fill="#fff"/>
<path d="M0 24 V20 C0 16.5 3 14.5 8 13.5 L12 14.5 L16 13.5 C21 14.5 24 16.5 24 20 V24 Z" fill="#5a5a5a"/>
<path d="M9.3 14.2 L12 21.5 L14.7 14.2 L12 14.8 Z" fill="#fff"/>
<path d="M11.3 15.5 H12.7 L13.1 20 L12 21.5 L10.9 20 Z" fill="#5a5a5a"/>
</g></svg>
<div class="a t" id="t78" style="left:564px;top:890px;font-size:12px;line-height:12px;color:#000;font-weight:normal;letter-spacing:-0.211px;">13. Firme</div>
<div class="a t" id="t79" style="left:856px;top:242px;font-size:12px;line-height:12px;color:#b4b4b4;font-weight:normal;letter-spacing:-0.215px;">ADR: The European Agreement co</div>
<div class="a t" id="t80" style="left:856px;top:257px;font-size:12px;line-height:12px;color:#b4b4b4;font-weight:normal;letter-spacing:-0.369px;">Update: 2019</div>
<div class="a t" id="t81" style="left:856px;top:274px;font-size:12px;line-height:12px;color:#b4b4b4;font-weight:normal;letter-spacing:-0.670px;">ADR 1.8.3</div>
<div class="a t" id="t82" style="left:856px;top:562px;font-size:12px;line-height:12px;color:#b4b4b4;font-weight:normal;letter-spacing:0.214px;">Note</div>
<div class="a" style="left:1045px;top:131px;width:4px;height:877px;background:#efefef;"></div>
<div class="a" style="left:1049px;top:131px;width:864px;height:877px;background:#fff;"></div>
<div class="a" style="left:1049px;top:131px;width:864px;height:48px;background:linear-gradient(#e8eefb, #b9cbef);box-sizing:border-box;border:1px solid #86a0d8;"></div>
<svg class="a" style="left:1053px;top:145px;" width="33" height="26" viewBox="0 0 33 26"><g transform="scale(1.0,1.0)" fill="none" stroke="#222" stroke-width="1.9" stroke-linejoin="round">
<path d="M12.5 20.5 V1.5 Q12.5 1 13 1 H31 V20.5 H26.5"/>
<path d="M20.5 20.5 H10.5"/>
<path d="M12.5 6.5 H5.5 Q3 6.5 2 9 L1 12 V20.5 H4"/>
<path d="M1.5 12.5 H6.5 Q8 12.5 8 11 V9 Q8 8 6.5 8 H4"/>
<circle cx="7.2" cy="21" r="3"/>
<circle cx="23.5" cy="21" r="3"/>
</g></svg>
<div class="a t" id="t83" style="left:1092px;top:141px;font-size:27px;line-height:27px;color:#000;font-weight:normal;letter-spacing:0.325px;">4. Veicoli</div>
<div class="a" style="left:1049px;top:179px;width:864px;height:25px;background:#f5f6f7;"></div>
<svg class="a" style="left:1052px;top:183px;" width="3" height="16" viewBox="0 0 3 16"><path d="M1.5 0 V16" stroke="#a8a8a8" stroke-width="2" stroke-dasharray="2 2"/></svg>
<svg class="a" style="left:1060px;top:183px;" width="16" height="16" viewBox="0 0 16 16"><circle cx="8.0" cy="8.0" r="8.0" fill="#4faa7e"/>
<path d="M2.88 8.0H13.120000000000001M8.0 2.88V13.120000000000001" stroke="#fff" stroke-width="2.24"/></svg>
<div class="a t" id="t84" style="left:1079px;top:186px;font-size:12px;line-height:12px;color:#000;font-weight:normal;letter-spacing:0.303px;">Aggiungi riga</div>
<svg class="a" style="left:1160px;top:184px;" width="14" height="14" viewBox="0 0 14 14"><path d="M1.5 1.5 L12.5 12.5 M12.5 1.5 L1.5 12.5" stroke="#d9382b" stroke-width="3"/></svg>
<div class="a t" id="t85" style="left:1178px;top:186px;font-size:12px;line-height:12px;color:#000;font-weight:normal;letter-spacing:0.119px;">Rimuovi riga</div>
<div class="a" style="left:1254px;top:184px;width:1px;height:16px;background:#cfd1d6;"></div>
<svg class="a" style="left:1259px;top:182px;" width="17" height="17" viewBox="0 0 17 17"><rect x="0.5" y="0.5" width="14" height="15" fill="#fff" stroke="#6e6e6e" stroke-width="1"/><rect x="0" y="0" width="15" height="3" fill="#3d72b4"/>
<path d="M3 6h4M3 9h4M3 12h4" stroke="#6e6e6e" stroke-width="1"/><path d="M12 5 L7 11 H10.5 L8 17 L16 9 H12.5 L15 5 Z" fill="#f2a23a"/></svg>
<div class="a t" id="t86" style="left:1278px;top:186px;font-size:12px;line-height:12px;color:#000;font-weight:normal;letter-spacing:0.108px;">Valori predefiniti</div>
<div class="a" style="left:1096px;top:205px;width:1px;height:24px;background:#ececec;"></div>
<div class="a" style="left:1227px;top:205px;width:1px;height:24px;background:#ececec;"></div>
<div class="a" style="left:1423px;top:205px;width:1px;height:24px;background:#ececec;"></div>
<div class="a" style="left:1493px;top:205px;width:1px;height:24px;background:#ececec;"></div>
<div class="a" style="left:1583px;top:205px;width:1px;height:24px;background:#ececec;"></div>
<div class="a" style="left:1911px;top:205px;width:1px;height:24px;background:#ececec;"></div>
<div class="a t" id="t87" style="left:1055px;top:211px;font-size:12px;line-height:12px;color:#000;font-weight:normal;letter-spacing:0.394px;">Ordine</div>
<div class="a t" id="t88" style="left:1103px;top:211px;font-size:12px;line-height:12px;color:#000;font-weight:normal;letter-spacing:0.173px;">Tipo veicolo</div>
<div class="a t" id="t89" style="left:1234px;top:211px;font-size:12px;line-height:12px;color:#000;font-weight:normal;letter-spacing:0.039px;">Marca</div>
<div class="a t" id="t90" style="left:1430px;top:211px;font-size:12px;line-height:12px;color:#000;font-weight:normal;letter-spacing:0.163px;">Anno im...</div>
<div class="a t" id="t91" style="left:1500px;top:211px;font-size:12px;line-height:12px;color:#000;font-weight:normal;letter-spacing:0.177px;">Identificativo</div>
<div class="a t" id="t92" style="left:1590px;top:211px;font-size:12px;line-height:12px;color:#000;font-weight:normal;letter-spacing:0.714px;">Note</div>
<svg class="a" style="left:1158px;top:204px;" width="9" height="5" viewBox="0 0 9 5"><path d="M0.5 0.5 L4.5 4 L8.5 0.5" fill="none" stroke="#9a9a9a" stroke-width="1"/></svg>
<div class="a" style="left:1049px;top:255px;width:863px;height:1px;background:#ebebeb;"></div>
<div class="a" style="left:1049px;top:282px;width:863px;height:1px;background:#ebebeb;"></div>
<div class="a" style="left:1049px;top:309px;width:863px;height:1px;background:#ebebeb;"></div>
<div class="a" style="left:1049px;top:336px;width:863px;height:1px;background:#ebebeb;"></div>
<div class="a" style="left:1049px;top:363px;width:863px;height:1px;background:#ebebeb;"></div>
<div class="a" style="left:1049px;top:390px;width:863px;height:1px;background:#ebebeb;"></div>
<div class="a" style="left:1049px;top:417px;width:863px;height:1px;background:#ebebeb;"></div>
<div class="a" style="left:1049px;top:444px;width:863px;height:1px;background:#ebebeb;"></div>
<div class="a" style="left:1049px;top:471px;width:863px;height:1px;background:#ebebeb;"></div>
<div class="a" style="left:1049px;top:498px;width:863px;height:1px;background:#ebebeb;"></div>
<div class="a" style="left:1049px;top:525px;width:863px;height:1px;background:#ebebeb;"></div>
<div class="a" style="left:1049px;top:552px;width:863px;height:1px;background:#ebebeb;"></div>
<div class="a" style="left:1049px;top:579px;width:863px;height:1px;background:#ebebeb;"></div>
<div class="a" style="left:1049px;top:606px;width:863px;height:1px;background:#ebebeb;"></div>
<div class="a" style="left:1049px;top:633px;width:863px;height:1px;background:#ebebeb;"></div>
<div class="a" style="left:1049px;top:660px;width:863px;height:1px;background:#ebebeb;"></div>
<div class="a" style="left:1049px;top:687px;width:863px;height:1px;background:#ebebeb;"></div>
<div class="a" style="left:1049px;top:714px;width:863px;height:1px;background:#ebebeb;"></div>
<div class="a" style="left:1049px;top:741px;width:863px;height:1px;background:#ebebeb;"></div>
<div class="a" style="left:1049px;top:768px;width:863px;height:1px;background:#ebebeb;"></div>
<div class="a" style="left:1049px;top:795px;width:863px;height:1px;background:#ebebeb;"></div>
<div class="a" style="left:1049px;top:822px;width:863px;height:1px;background:#ebebeb;"></div>
<div class="a" style="left:1049px;top:849px;width:863px;height:1px;background:#ebebeb;"></div>
<div class="a" style="left:1049px;top:876px;width:863px;height:1px;background:#ebebeb;"></div>
<div class="a" style="left:1049px;top:903px;width:863px;height:1px;background:#ebebeb;"></div>
<div class="a" style="left:1049px;top:930px;width:863px;height:1px;background:#ebebeb;"></div>
<div class="a" style="left:1049px;top:957px;width:863px;height:1px;background:#ebebeb;"></div>
<div class="a" style="left:1049px;top:984px;width:863px;height:1px;background:#ebebeb;"></div>
<div class="a" style="left:1097px;top:229px;width:1px;height:779px;background:#ebebeb;"></div>
<div class="a" style="left:1228px;top:229px;width:1px;height:779px;background:#ebebeb;"></div>
<div class="a" style="left:1424px;top:229px;width:1px;height:779px;background:#ebebeb;"></div>
<div class="a" style="left:1494px;top:229px;width:1px;height:779px;background:#ebebeb;"></div>
<div class="a" style="left:1584px;top:229px;width:1px;height:779px;background:#ebebeb;"></div>
<div class="a" style="left:1097px;top:230px;width:131px;height:25px;background:#f7f7f7;"></div>
<svg class="a" style="left:1052px;top:236px;" width="25" height="18" viewBox="0 0 25 18"><g transform="scale(0.75,0.72)" fill="none" stroke="#333" stroke-width="1.3" stroke-linejoin="round">
<path d="M12.5 20.5 V1.5 Q12.5 1 13 1 H31 V20.5 H26.5"/>
<path d="M20.5 20.5 H10.5"/>
<path d="M12.5 6.5 H5.5 Q3 6.5 2 9 L1 12 V20.5 H4"/>
<path d="M1.5 12.5 H6.5 Q8 12.5 8 11 V9 Q8 8 6.5 8 H4"/>
<circle cx="7.2" cy="21" r="3"/>
<circle cx="23.5" cy="21" r="3"/>
</g></svg>
<div class="a t" id="t93" style="left:1080px;top:237px;font-size:12px;line-height:12px;color:#000;font-weight:normal;letter-spacing:0.000px;">1</div>
<div class="a t" id="t94" style="left:1101px;top:237px;font-size:12px;line-height:12px;color:#000;font-weight:normal;letter-spacing:0.114px;">Container telonati</div>
<div class="a t" id="t95" style="left:1231px;top:237px;font-size:12px;line-height:12px;color:#000;font-weight:normal;letter-spacing:-0.961px;">IVECO</div>
<div class="a t" id="t96" style="left:1427px;top:237px;font-size:12px;line-height:12px;color:#000;font-weight:normal;letter-spacing:-0.401px;">2016</div>
<div class="a t" id="t97" style="left:1497px;top:237px;font-size:12px;line-height:12px;color:#000;font-weight:normal;letter-spacing:-0.676px;">V2012</div>
<div class="a t" id="t98" style="left:1587px;top:237px;font-size:12px;line-height:12px;color:#000;font-weight:normal;letter-spacing:-0.064px;">Veicolo  adibito trasporto UN 3082</div>
<div class="a" style="left:0px;top:1015px;width:1920px;height:1px;background:#fff;"></div>
<div class="a" style="left:0px;top:1016px;width:1920px;height:24px;background:#f5f6f7;"></div>
<div class="a" style="left:1614px;top:1018px;width:1px;height:20px;background:#a0a0a0;"></div>
<div class="a" style="left:1615px;top:1018px;width:1px;height:20px;background:#ffffff;"></div>
<div class="a" style="left:1691px;top:1018px;width:1px;height:20px;background:#a0a0a0;"></div>
<div class="a" style="left:1692px;top:1018px;width:1px;height:20px;background:#ffffff;"></div>
<div class="a" style="left:1746px;top:1018px;width:1px;height:20px;background:#a0a0a0;"></div>
<div class="a" style="left:1747px;top:1018px;width:1px;height:20px;background:#ffffff;"></div>
<div class="a" style="left:1876px;top:1018px;width:1px;height:20px;background:#a0a0a0;"></div>
<div class="a" style="left:1877px;top:1018px;width:1px;height:20px;background:#ffffff;"></div>
<svg class="a" style="left:1617px;top:1020px;" width="14" height="16" viewBox="0 0 14 16"><path d="M3.5 9 L1.2 14.5 L3.8 14 L5 16 L6.5 10.5 Z M9.5 9 L11.8 14.5 L9.2 14 L8 16 L6.5 10.5 Z" fill="#c23a1c"/><polygon points="6.50,-0.80 7.95,0.39 9.80,0.08 10.46,1.84 12.22,2.50 11.91,4.35 13.10,5.80 11.91,7.25 12.22,9.10 10.46,9.76 9.80,11.52 7.95,11.21 6.50,12.40 5.05,11.21 3.20,11.52 2.54,9.76 0.78,9.10 1.09,7.25 -0.10,5.80 1.09,4.35 0.78,2.50 2.54,1.84 3.20,0.08 5.05,0.39" fill="#e0522a"/><circle cx="6.5" cy="5.8" r="3.6" fill="none" stroke="#f39a70" stroke-width="0.8"/></svg>
<div class="a t" id="t99" style="left:1636px;top:1022px;font-size:12px;line-height:12px;color:#000;font-weight:normal;letter-spacing:-0.768px;">ADR 2019</div>
<svg class="a" style="left:1693px;top:1020px;" width="17" height="17" viewBox="0 0 17 17"><g fill="none" stroke="#2f6fb5" stroke-width="2.2"><rect x="0.5" y="8.2" width="9.5" height="5" rx="2.5" transform="rotate(-45 5.25 10.7)"/><rect x="6.5" y="2.2" width="9.5" height="5" rx="2.5" transform="rotate(-45 11.25 4.7)"/></g></svg>
<div class="a t" id="t100" style="left:1713px;top:1022px;font-size:12px;line-height:12px;color:#000;font-weight:normal;letter-spacing:0.160px;">adrfu</div>
<svg class="a" style="left:1748px;top:1020px;" width="16" height="16" viewBox="0 0 16 16"><circle cx="8" cy="8" r="7" fill="#fff" stroke="#555" stroke-width="1.5"/><path d="M8 3.5 V8.5 H11.5" fill="none" stroke="#2f6fb5" stroke-width="1.5"/></svg>
<div class="a t" id="t101" style="left:1768px;top:1022px;font-size:12px;line-height:12px;color:#000;font-weight:normal;letter-spacing:-0.395px;">16/10/2019 08:30:50</div>
<svg class="a" style="left:1880px;top:1020px;" width="15" height="15" viewBox="0 0 15 15"><circle cx="7.5" cy="7.5" r="7" fill="#3d72b4"/><text x="7.5" y="10.5" text-anchor="middle" font-family="Liberation Sans" font-size="7.5" fill="#fff">IT</text></svg>
<svg class="a" style="left:1897px;top:1026px;" width="6" height="3" viewBox="0 0 6 3"><path d="M0 0 H6 L3 3 Z" fill="#000"/></svg>
</body></html>
